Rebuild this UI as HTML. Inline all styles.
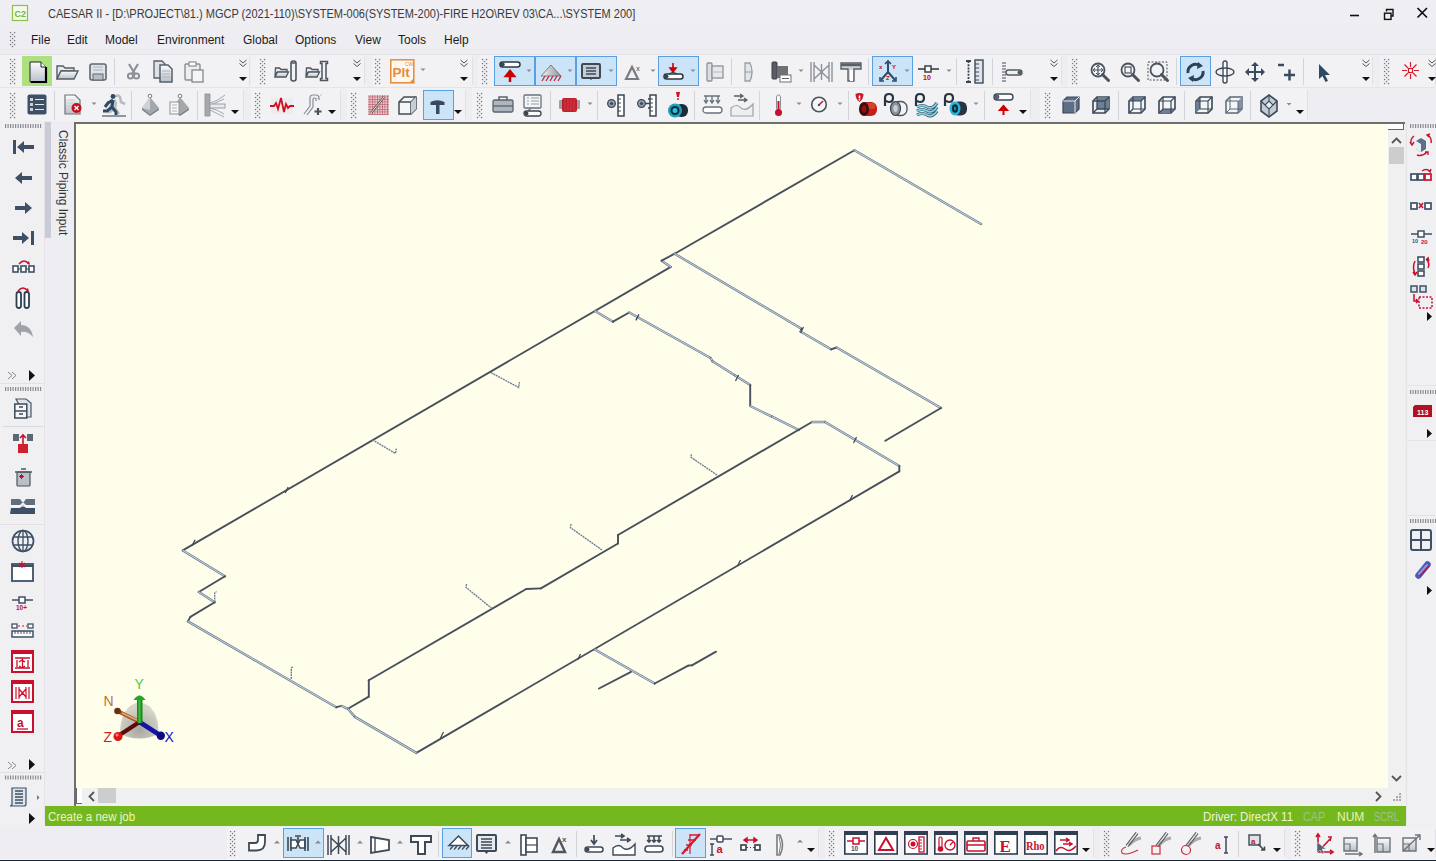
<!DOCTYPE html>
<html><head><meta charset="utf-8"><style>
html,body{margin:0;padding:0;}
body{width:1436px;height:861px;position:relative;overflow:hidden;background:#eeeef2;font-family:"Liberation Sans",sans-serif;}
.t{position:absolute;white-space:nowrap;line-height:14px;}
svg{position:absolute;overflow:visible;}
</style></head><body>
<div style="position:absolute;left:0px;top:0px;width:1436px;height:27px;background:#eeeef3;"></div><div class="t" style="left:48px;top:6.5px;font-size:12px;color:#3a3a3a;transform:scaleX(0.917);transform-origin:0 0;">CAESAR II - [D:\PROJECT\81.) MGCP (2021-110)\SYSTEM-006(SYSTEM-200)-FIRE H2O\REV 03\CA...\SYSTEM 200]</div><div class="t" style="left:31px;top:33px;font-size:12px;color:#1b1b1b;">File</div><div class="t" style="left:67px;top:33px;font-size:12px;color:#1b1b1b;">Edit</div><div class="t" style="left:105px;top:33px;font-size:12px;color:#1b1b1b;">Model</div><div class="t" style="left:157px;top:33px;font-size:12px;color:#1b1b1b;">Environment</div><div class="t" style="left:243px;top:33px;font-size:12px;color:#1b1b1b;">Global</div><div class="t" style="left:295px;top:33px;font-size:12px;color:#1b1b1b;">Options</div><div class="t" style="left:355px;top:33px;font-size:12px;color:#1b1b1b;">View</div><div class="t" style="left:398px;top:33px;font-size:12px;color:#1b1b1b;">Tools</div><div class="t" style="left:444px;top:33px;font-size:12px;color:#1b1b1b;">Help</div><div style="position:absolute;left:0px;top:54px;width:1436px;height:1px;background:#e2e2e8;"></div><div style="position:absolute;left:0px;top:49px;width:1436px;height:1px;background:#e8e8ee;"></div><div style="position:absolute;left:0px;top:87px;width:1436px;height:1px;background:#e4e4ea;"></div><div style="position:absolute;left:74px;top:122px;width:1331px;height:2px;background:#6f6f72;"></div><div style="position:absolute;left:74px;top:122px;width:2px;height:684px;background:#6f6f72;"></div><div style="position:absolute;left:76px;top:124px;width:1312px;height:664px;background:#fffeea;"></div><div style="position:absolute;left:1388px;top:124px;width:17px;height:664px;background:#f0f0f0;"></div><div style="position:absolute;left:1389px;top:147px;width:15px;height:17px;background:#cdcdcd;"></div><div style="position:absolute;left:76px;top:788px;width:1329px;height:18px;background:#f0f0f0;"></div><div style="position:absolute;left:98px;top:788px;width:18px;height:15px;background:#cdcdcd;"></div><div style="position:absolute;left:1388px;top:124px;width:16px;height:6px;background:#ffffff;border-right:1px solid #666;border-bottom:1px solid #666;box-sizing:border-box;"></div><div style="position:absolute;left:76px;top:788px;width:6px;height:16px;background:#ffffff;border-left:1px solid #666;border-bottom:1px solid #666;box-sizing:border-box;"></div><div style="position:absolute;left:45px;top:122px;width:6px;height:116px;background:#cacbd6;"></div><div class="t" style="left:57px;top:130px;font-size:12px;color:#333;transform:rotate(90deg);transform-origin:0 0;left:70px;">Classic Piping Input</div><div style="position:absolute;left:44px;top:122px;width:1px;height:700px;background:#e3e3e8;"></div><div style="position:absolute;left:1406px;top:122px;width:1px;height:700px;background:#e3e3e8;"></div><div style="position:absolute;left:45px;top:806px;width:1361px;height:20px;background:#74b71f;"></div><div class="t" style="left:48px;top:810px;font-size:12px;color:#e9f6c4;transform:scaleX(0.96);transform-origin:0 0;">Create a new job</div><div class="t" style="left:1203px;top:810px;font-size:12px;color:#edf6dc;transform:scaleX(0.96);transform-origin:0 0;">Driver: DirectX 11</div><div class="t" style="left:1303px;top:810px;font-size:12px;color:#a0c090;transform:scaleX(0.9);transform-origin:0 0;">CAP</div><div class="t" style="left:1337px;top:810px;font-size:12px;color:#e6f5b8;">NUM</div><div class="t" style="left:1374px;top:810px;font-size:12px;color:#a0c090;transform:scaleX(0.78);transform-origin:0 0;">SCRL</div><div style="position:absolute;left:0px;top:859px;width:1436px;height:1px;background:#f6f6fa;"></div><div style="position:absolute;left:0px;top:860px;width:1436px;height:1px;background:#1a2430;"></div>
<svg width="1436" height="861" style="left:0;top:0;" viewBox="0 0 1436 861">
<defs>
<linearGradient id="gdoc" x1="0" y1="0" x2="0" y2="1"><stop offset="0" stop-color="#fbfcfd"/><stop offset="1" stop-color="#b9c0c9"/></linearGradient>
<linearGradient id="gpyr" x1="0" y1="0" x2="1" y2="0"><stop offset="0" stop-color="#f4f4f4"/><stop offset="1" stop-color="#8f949a"/></linearGradient>
<pattern id="ghatch" width="2.5" height="2.5" patternUnits="userSpaceOnUse"><rect width="2.5" height="2.5" fill="#e8c8cc"/><path d="M0 0 h2.5 M0 0 v2.5" stroke="#a83848" stroke-width="0.9"/></pattern>
</defs>
<rect x="0" y="55" width="250" height="32" fill="#f2f2f5"/><rect x="249" y="57" width="1" height="28" fill="#e0e0e6"/><rect x="251" y="55" width="114" height="32" fill="#f2f2f5"/><rect x="364" y="57" width="1" height="28" fill="#e0e0e6"/><rect x="372" y="55" width="101" height="32" fill="#f2f2f5"/><rect x="472" y="57" width="1" height="28" fill="#e0e0e6"/><rect x="478" y="55" width="584" height="32" fill="#f2f2f5"/><rect x="1061" y="57" width="1" height="28" fill="#e0e0e6"/><rect x="1068" y="55" width="305" height="32" fill="#f2f2f5"/><rect x="1372" y="57" width="1" height="28" fill="#e0e0e6"/><rect x="1380" y="55" width="56" height="32" fill="#f2f2f5"/><rect x="1435" y="57" width="1" height="28" fill="#e0e0e6"/><rect x="0" y="88" width="244" height="33" fill="#f2f2f5"/><rect x="243" y="90" width="1" height="29" fill="#e0e0e6"/><rect x="251" y="88" width="90" height="33" fill="#f2f2f5"/><rect x="340" y="90" width="1" height="29" fill="#e0e0e6"/><rect x="347" y="88" width="119" height="33" fill="#f2f2f5"/><rect x="465" y="90" width="1" height="29" fill="#e0e0e6"/><rect x="472" y="88" width="559" height="33" fill="#f2f2f5"/><rect x="1030" y="90" width="1" height="29" fill="#e0e0e6"/><rect x="1040" y="88" width="268" height="33" fill="#f2f2f5"/><rect x="1307" y="90" width="1" height="29" fill="#e0e0e6"/><rect x="9.9" y="58.9" width="1.3" height="1.3" fill="#77777f"/><rect x="13.9" y="58.9" width="1.3" height="1.3" fill="#77777f"/><rect x="11.9" y="60.9" width="1.3" height="1.3" fill="#77777f"/><rect x="9.9" y="62.9" width="1.3" height="1.3" fill="#77777f"/><rect x="13.9" y="62.9" width="1.3" height="1.3" fill="#77777f"/><rect x="11.9" y="64.9" width="1.3" height="1.3" fill="#77777f"/><rect x="9.9" y="66.9" width="1.3" height="1.3" fill="#77777f"/><rect x="13.9" y="66.9" width="1.3" height="1.3" fill="#77777f"/><rect x="11.9" y="68.9" width="1.3" height="1.3" fill="#77777f"/><rect x="9.9" y="70.9" width="1.3" height="1.3" fill="#77777f"/><rect x="13.9" y="70.9" width="1.3" height="1.3" fill="#77777f"/><rect x="11.9" y="72.9" width="1.3" height="1.3" fill="#77777f"/><rect x="9.9" y="74.9" width="1.3" height="1.3" fill="#77777f"/><rect x="13.9" y="74.9" width="1.3" height="1.3" fill="#77777f"/><rect x="11.9" y="76.9" width="1.3" height="1.3" fill="#77777f"/><rect x="9.9" y="78.9" width="1.3" height="1.3" fill="#77777f"/><rect x="13.9" y="78.9" width="1.3" height="1.3" fill="#77777f"/><rect x="11.9" y="80.9" width="1.3" height="1.3" fill="#77777f"/><rect x="9.9" y="82.9" width="1.3" height="1.3" fill="#77777f"/><rect x="13.9" y="82.9" width="1.3" height="1.3" fill="#77777f"/><rect x="259.9" y="58.9" width="1.3" height="1.3" fill="#77777f"/><rect x="263.9" y="58.9" width="1.3" height="1.3" fill="#77777f"/><rect x="261.9" y="60.9" width="1.3" height="1.3" fill="#77777f"/><rect x="259.9" y="62.9" width="1.3" height="1.3" fill="#77777f"/><rect x="263.9" y="62.9" width="1.3" height="1.3" fill="#77777f"/><rect x="261.9" y="64.9" width="1.3" height="1.3" fill="#77777f"/><rect x="259.9" y="66.9" width="1.3" height="1.3" fill="#77777f"/><rect x="263.9" y="66.9" width="1.3" height="1.3" fill="#77777f"/><rect x="261.9" y="68.9" width="1.3" height="1.3" fill="#77777f"/><rect x="259.9" y="70.9" width="1.3" height="1.3" fill="#77777f"/><rect x="263.9" y="70.9" width="1.3" height="1.3" fill="#77777f"/><rect x="261.9" y="72.9" width="1.3" height="1.3" fill="#77777f"/><rect x="259.9" y="74.9" width="1.3" height="1.3" fill="#77777f"/><rect x="263.9" y="74.9" width="1.3" height="1.3" fill="#77777f"/><rect x="261.9" y="76.9" width="1.3" height="1.3" fill="#77777f"/><rect x="259.9" y="78.9" width="1.3" height="1.3" fill="#77777f"/><rect x="263.9" y="78.9" width="1.3" height="1.3" fill="#77777f"/><rect x="261.9" y="80.9" width="1.3" height="1.3" fill="#77777f"/><rect x="259.9" y="82.9" width="1.3" height="1.3" fill="#77777f"/><rect x="263.9" y="82.9" width="1.3" height="1.3" fill="#77777f"/><rect x="374.9" y="58.9" width="1.3" height="1.3" fill="#77777f"/><rect x="378.9" y="58.9" width="1.3" height="1.3" fill="#77777f"/><rect x="376.9" y="60.9" width="1.3" height="1.3" fill="#77777f"/><rect x="374.9" y="62.9" width="1.3" height="1.3" fill="#77777f"/><rect x="378.9" y="62.9" width="1.3" height="1.3" fill="#77777f"/><rect x="376.9" y="64.9" width="1.3" height="1.3" fill="#77777f"/><rect x="374.9" y="66.9" width="1.3" height="1.3" fill="#77777f"/><rect x="378.9" y="66.9" width="1.3" height="1.3" fill="#77777f"/><rect x="376.9" y="68.9" width="1.3" height="1.3" fill="#77777f"/><rect x="374.9" y="70.9" width="1.3" height="1.3" fill="#77777f"/><rect x="378.9" y="70.9" width="1.3" height="1.3" fill="#77777f"/><rect x="376.9" y="72.9" width="1.3" height="1.3" fill="#77777f"/><rect x="374.9" y="74.9" width="1.3" height="1.3" fill="#77777f"/><rect x="378.9" y="74.9" width="1.3" height="1.3" fill="#77777f"/><rect x="376.9" y="76.9" width="1.3" height="1.3" fill="#77777f"/><rect x="374.9" y="78.9" width="1.3" height="1.3" fill="#77777f"/><rect x="378.9" y="78.9" width="1.3" height="1.3" fill="#77777f"/><rect x="376.9" y="80.9" width="1.3" height="1.3" fill="#77777f"/><rect x="374.9" y="82.9" width="1.3" height="1.3" fill="#77777f"/><rect x="378.9" y="82.9" width="1.3" height="1.3" fill="#77777f"/><rect x="481.9" y="58.9" width="1.3" height="1.3" fill="#77777f"/><rect x="485.9" y="58.9" width="1.3" height="1.3" fill="#77777f"/><rect x="483.9" y="60.9" width="1.3" height="1.3" fill="#77777f"/><rect x="481.9" y="62.9" width="1.3" height="1.3" fill="#77777f"/><rect x="485.9" y="62.9" width="1.3" height="1.3" fill="#77777f"/><rect x="483.9" y="64.9" width="1.3" height="1.3" fill="#77777f"/><rect x="481.9" y="66.9" width="1.3" height="1.3" fill="#77777f"/><rect x="485.9" y="66.9" width="1.3" height="1.3" fill="#77777f"/><rect x="483.9" y="68.9" width="1.3" height="1.3" fill="#77777f"/><rect x="481.9" y="70.9" width="1.3" height="1.3" fill="#77777f"/><rect x="485.9" y="70.9" width="1.3" height="1.3" fill="#77777f"/><rect x="483.9" y="72.9" width="1.3" height="1.3" fill="#77777f"/><rect x="481.9" y="74.9" width="1.3" height="1.3" fill="#77777f"/><rect x="485.9" y="74.9" width="1.3" height="1.3" fill="#77777f"/><rect x="483.9" y="76.9" width="1.3" height="1.3" fill="#77777f"/><rect x="481.9" y="78.9" width="1.3" height="1.3" fill="#77777f"/><rect x="485.9" y="78.9" width="1.3" height="1.3" fill="#77777f"/><rect x="483.9" y="80.9" width="1.3" height="1.3" fill="#77777f"/><rect x="481.9" y="82.9" width="1.3" height="1.3" fill="#77777f"/><rect x="485.9" y="82.9" width="1.3" height="1.3" fill="#77777f"/><rect x="1071.9" y="58.9" width="1.3" height="1.3" fill="#77777f"/><rect x="1075.9" y="58.9" width="1.3" height="1.3" fill="#77777f"/><rect x="1073.9" y="60.9" width="1.3" height="1.3" fill="#77777f"/><rect x="1071.9" y="62.9" width="1.3" height="1.3" fill="#77777f"/><rect x="1075.9" y="62.9" width="1.3" height="1.3" fill="#77777f"/><rect x="1073.9" y="64.9" width="1.3" height="1.3" fill="#77777f"/><rect x="1071.9" y="66.9" width="1.3" height="1.3" fill="#77777f"/><rect x="1075.9" y="66.9" width="1.3" height="1.3" fill="#77777f"/><rect x="1073.9" y="68.9" width="1.3" height="1.3" fill="#77777f"/><rect x="1071.9" y="70.9" width="1.3" height="1.3" fill="#77777f"/><rect x="1075.9" y="70.9" width="1.3" height="1.3" fill="#77777f"/><rect x="1073.9" y="72.9" width="1.3" height="1.3" fill="#77777f"/><rect x="1071.9" y="74.9" width="1.3" height="1.3" fill="#77777f"/><rect x="1075.9" y="74.9" width="1.3" height="1.3" fill="#77777f"/><rect x="1073.9" y="76.9" width="1.3" height="1.3" fill="#77777f"/><rect x="1071.9" y="78.9" width="1.3" height="1.3" fill="#77777f"/><rect x="1075.9" y="78.9" width="1.3" height="1.3" fill="#77777f"/><rect x="1073.9" y="80.9" width="1.3" height="1.3" fill="#77777f"/><rect x="1071.9" y="82.9" width="1.3" height="1.3" fill="#77777f"/><rect x="1075.9" y="82.9" width="1.3" height="1.3" fill="#77777f"/><rect x="1383.9" y="58.9" width="1.3" height="1.3" fill="#77777f"/><rect x="1387.9" y="58.9" width="1.3" height="1.3" fill="#77777f"/><rect x="1385.9" y="60.9" width="1.3" height="1.3" fill="#77777f"/><rect x="1383.9" y="62.9" width="1.3" height="1.3" fill="#77777f"/><rect x="1387.9" y="62.9" width="1.3" height="1.3" fill="#77777f"/><rect x="1385.9" y="64.9" width="1.3" height="1.3" fill="#77777f"/><rect x="1383.9" y="66.9" width="1.3" height="1.3" fill="#77777f"/><rect x="1387.9" y="66.9" width="1.3" height="1.3" fill="#77777f"/><rect x="1385.9" y="68.9" width="1.3" height="1.3" fill="#77777f"/><rect x="1383.9" y="70.9" width="1.3" height="1.3" fill="#77777f"/><rect x="1387.9" y="70.9" width="1.3" height="1.3" fill="#77777f"/><rect x="1385.9" y="72.9" width="1.3" height="1.3" fill="#77777f"/><rect x="1383.9" y="74.9" width="1.3" height="1.3" fill="#77777f"/><rect x="1387.9" y="74.9" width="1.3" height="1.3" fill="#77777f"/><rect x="1385.9" y="76.9" width="1.3" height="1.3" fill="#77777f"/><rect x="1383.9" y="78.9" width="1.3" height="1.3" fill="#77777f"/><rect x="1387.9" y="78.9" width="1.3" height="1.3" fill="#77777f"/><rect x="1385.9" y="80.9" width="1.3" height="1.3" fill="#77777f"/><rect x="1383.9" y="82.9" width="1.3" height="1.3" fill="#77777f"/><rect x="1387.9" y="82.9" width="1.3" height="1.3" fill="#77777f"/><rect x="22.5" y="56.5" width="29" height="29" fill="#ade07e" stroke="#ade07e" stroke-width="1"/><g transform="translate(29,61)"><path d="M1 1 h11 l5 5 v15 h-16z" fill="url(#gdoc)" stroke="#222" stroke-width="1"/><path d="M2 21 h15 v-15" stroke="#000" stroke-width="2.2" fill="none"/><path d="M12 1 v5 h5" fill="#fff" stroke="#222" stroke-width="1"/></g><g transform="translate(56,63)"><path d="M1 3 h6 l2 2 h9 v3 h-13 l-4 8z" fill="#e8eaee" stroke="#555d66" stroke-width="1.4"/><path d="M5 8 h17 l-4 8 h-17z" fill="url(#gdoc)" stroke="#555d66" stroke-width="1.4"/></g><g transform="translate(89,63)"><rect x="1" y="1" width="16" height="16" rx="2" fill="#dfe2e7" stroke="#5f6770" stroke-width="1.6"/><rect x="4" y="11" width="10" height="6" fill="#b8bec6" stroke="#5f6770" stroke-width="1"/><path d="M4 4 h10 M4 7 h10" stroke="#b0b5bc" stroke-width="1"/></g><rect x="114" y="58" width="1" height="27" fill="#d3d3da"/><g transform="translate(127,63)"><path d="M2 1 l6 10 M11 1 l-6 10" stroke="#8d9197" stroke-width="2.2"/><circle cx="3.5" cy="13" r="2.6" fill="none" stroke="#8d9197" stroke-width="2"/><circle cx="9.5" cy="13" r="2.6" fill="none" stroke="#8d9197" stroke-width="2"/></g><g transform="translate(153,60)"><path d="M1 1 h8 l3 3 v14 h-11z" fill="#dde2e8" stroke="#56606b" stroke-width="1.3"/><path d="M7 5 h8 l4 4 v13 h-12z" fill="url(#gdoc)" stroke="#56606b" stroke-width="1.5"/><path d="M9 11 h8 M9 14 h8 M9 17 h8" stroke="#aab3bd" stroke-width="1"/></g><g transform="translate(184,61)"><rect x="1" y="3" width="15" height="16" rx="1" fill="#eceef0" stroke="#8a8f95" stroke-width="1.4"/><rect x="5" y="1" width="7" height="4" fill="#fff" stroke="#8a8f95" stroke-width="1.2"/><rect x="8" y="9" width="11" height="12" fill="#f4f5f6" stroke="#8a8f95" stroke-width="1.4"/></g><path d="M239.5 60 l3.5 3 l3.5 -3 M239.5 63.5 l3.5 3 l3.5 -3" stroke="#555" stroke-width="1" fill="none"/><path d="M239 77 h8 l-4 4z" fill="#111"/><g transform="translate(274,60)"><path d="M1.5 8 h4 l1.5 1.5 h6 v3 h-10 l-2 4z" fill="#e6e9ed" stroke="#4e565f" stroke-width="1.3"/><path d="M3.5 12 h11 l-2.5 5 h-11z" fill="url(#gdoc)" stroke="#4e565f" stroke-width="1.3"/><rect x="17" y="1" width="5" height="20" rx="2.2" fill="#f0f2f4" stroke="#4e565f" stroke-width="1.6"/><path d="M17.5 3 h4" stroke="#4e565f" stroke-width="1.5"/></g><g transform="translate(305,60)"><path d="M1.5 8 h4 l1.5 1.5 h6 v3 h-10 l-2 4z" fill="#e6e9ed" stroke="#4e565f" stroke-width="1.3"/><path d="M3.5 12 h11 l-2.5 5 h-11z" fill="url(#gdoc)" stroke="#4e565f" stroke-width="1.3"/><path d="M15.5 1.5 h7 v2 h-1.5 v15 h1.5 v2 h-7 v-2 h1.5 v-15 h-1.5z" fill="#f0f2f4" stroke="#4e565f" stroke-width="1.5"/></g><path d="M353.5 60 l3.5 3 l3.5 -3 M353.5 63.5 l3.5 3 l3.5 -3" stroke="#555" stroke-width="1" fill="none"/><path d="M353 77 h8 l-4 4z" fill="#111"/><g transform="translate(390,59)"><rect x="0.8" y="0.8" width="23" height="23" fill="#fff8f0" stroke="#e58a3a" stroke-width="1.5"/><text x="2.5" y="17.5" font-family="Liberation Sans" font-weight="bold" font-size="13.5" fill="#e58a3a">Plt</text><text x="15" y="7" font-family="Liberation Sans" font-size="5" fill="#e58a3a">CW</text><path d="M20 23 l3 -3 v3z" fill="#e58a3a"/></g><path d="M420.5 68.5 h5 l-2.5 2.5z" fill="#8a8a90"/><path d="M460.5 60 l3.5 3 l3.5 -3 M460.5 63.5 l3.5 3 l3.5 -3" stroke="#555" stroke-width="1" fill="none"/><path d="M460 77 h8 l-4 4z" fill="#111"/><rect x="494.5" y="56.5" width="40" height="29" fill="#cce4f7" stroke="#5b9fe3" stroke-width="1"/><rect x="535.5" y="56.5" width="40" height="29" fill="#cce4f7" stroke="#5b9fe3" stroke-width="1"/><rect x="576.5" y="56.5" width="40" height="29" fill="#cce4f7" stroke="#5b9fe3" stroke-width="1"/><g transform="translate(499,61)"><rect x="1" y="1" width="20" height="5" rx="2.5" fill="#fff" stroke="#2c3540" stroke-width="1.5"/><circle cx="3.5" cy="3.5" r="2.2" fill="#3b4654"/><path d="M11 21 v-9 M7 15 l4 -5 l4 5z" stroke="#c00" stroke-width="2.5" fill="#c00"/></g><path d="M526.5 69.5 h5 l-2.5 2.5z" fill="#8a8a90"/><g transform="translate(539,62)"><path d="M2 14 l10 -11 l10 11z" fill="url(#gpyr)" stroke="#666" stroke-width="0.8"/><path d="M3 19 l3 -5 M7 19 l3 -5 M11 19 l3 -5 M15 19 l3 -5 M19 19 l3 -5" stroke="#c03040" stroke-width="1.4"/></g><path d="M567.5 69.5 h5 l-2.5 2.5z" fill="#8a8a90"/><g transform="translate(581,62)"><rect x="1" y="2" width="18" height="14" rx="1" fill="#c5ccd4" stroke="#3e4a58" stroke-width="2"/><path d="M5 6 h10 M5 9 h10 M5 12 h10" stroke="#3e4a58" stroke-width="1.3"/><path d="M8 16 l2 2 l2 -2z" fill="#3e4a58"/></g><path d="M608.5 69.5 h5 l-2.5 2.5z" fill="#8a8a90"/><g transform="translate(624,63)"><path d="M2 16 l6 -12 l6 12z" fill="none" stroke="#777c82" stroke-width="2.2"/><text x="12" y="8" font-family="Liberation Sans" font-weight="bold" font-size="7" fill="#777c82">x</text></g><path d="M650.5 69.5 h5 l-2.5 2.5z" fill="#8a8a90"/><rect x="658.5" y="56.5" width="40" height="29" fill="#cce4f7" stroke="#5b9fe3" stroke-width="1"/><g transform="translate(663,62)"><path d="M10 1 v8 M7 6 l3 4 l3 -4z" stroke="#c00" stroke-width="1.6" fill="#c00"/><rect x="1" y="12" width="19" height="5" rx="2.5" fill="#fff" stroke="#2c3540" stroke-width="1.5"/><circle cx="3.5" cy="14.5" r="2" fill="#3b4654"/><path d="M6 12 q4 -3 8 0" fill="none" stroke="#2c3540" stroke-width="1.2"/></g><path d="M690.5 69.5 h5 l-2.5 2.5z" fill="#8a8a90"/><g transform="translate(706,61)"><rect x="1" y="2" width="5" height="18" rx="1" fill="#dcdfe3" stroke="#8f949a" stroke-width="1.3"/><rect x="6" y="5" width="11" height="12" fill="#e6e8eb" stroke="#8f949a" stroke-width="1.3"/><path d="M6 11 h11" stroke="#b7bbc0" stroke-width="1"/></g><rect x="731" y="58" width="1" height="27" fill="#d3d3da"/><g transform="translate(744,61)"><path d="M1 2 h5 q4 9 0 18 h-5z" fill="#e3e6e9" stroke="#9a9ea4" stroke-width="1.3"/><path d="M1 11 h8" stroke="#9a9ea4" stroke-width="1"/></g><g transform="translate(771,61)"><rect x="1" y="1" width="5" height="17" rx="1" fill="#5a5e64" stroke="#3b3f44" stroke-width="1"/><rect x="6" y="5" width="11" height="12" fill="#6d7177"/><rect x="9" y="14" width="11" height="7" fill="#fff" stroke="#6d7177" stroke-width="1"/><path d="M11 17.5 h7" stroke="#333" stroke-width="0.8"/></g><path d="M798.5 69.5 h5 l-2.5 2.5z" fill="#8a8a90"/><g transform="translate(810,61)"><path d="M1 1 v20 M4 1 v20 M19 1 v20 M22 1 v20 M4 4 l7.5 7 l7.5 -7 M4 18 l7.5 -7 l7.5 7 M11.5 3 v16" stroke="#8e9399" stroke-width="1.4" fill="none"/></g><g transform="translate(840,62)"><path d="M1 1 h20 v6 h-7 v12 h-6 v-12 h-7z" fill="#cfd3d8" stroke="#5a6068" stroke-width="1.4"/><path d="M1 3 h20" stroke="#5a6068" stroke-width="2.5"/><rect x="10" y="8" width="3" height="11" fill="#fff"/></g><rect x="868" y="58" width="1" height="27" fill="#d3d3da"/><rect x="872.5" y="56.5" width="40" height="29" fill="#cce4f7" stroke="#5b9fe3" stroke-width="1"/><g transform="translate(878,59)"><path d="M10 2 v11 M10 13 l-7 8 M10 13 l7 8" stroke="#2e4a6e" stroke-width="2"/><path d="M7 5 l3 -3 l3 3 M2 18 v4 h4 M18 18 v4 h-4" stroke="#2e4a6e" stroke-width="1.6" fill="none"/><text x="1" y="10" font-family="Liberation Sans" font-weight="bold" font-size="6" fill="#c00">x</text><text x="14" y="10" font-family="Liberation Sans" font-weight="bold" font-size="6" fill="#c00">Y</text><text x="8" y="21" font-family="Liberation Sans" font-weight="bold" font-size="6" fill="#c00">Z</text></g><path d="M904.5 69.5 h5 l-2.5 2.5z" fill="#8a8a90"/><g transform="translate(917,63)"><path d="M1 6 h21" stroke="#3b3f44" stroke-width="1.6"/><rect x="8" y="3" width="6" height="6" fill="#fff" stroke="#3b3f44" stroke-width="1.5"/><text x="6" y="17" font-family="Liberation Sans" font-weight="bold" font-size="7" fill="#c00">10</text></g><path d="M946.5 69.5 h5 l-2.5 2.5z" fill="#8a8a90"/><rect x="956" y="58" width="1" height="27" fill="#d3d3da"/><g transform="translate(965,59)"><path d="M1 2 h5 M1 23 h5 M3.5 2 v21" stroke="#3a4450" stroke-width="1.8" stroke-dasharray="2 1.2"/><path d="M1 2 h5 M1 23 h5" stroke="#3a4450" stroke-width="2"/><rect x="10" y="1" width="8" height="23" fill="#dfe4ea" stroke="#3e4a58" stroke-width="1.4"/><path d="M10 5 h4 M10 9 h4 M10 13 h4 M10 17 h4 M10 21 h4" stroke="#3e4a58" stroke-width="1"/></g><rect x="992" y="58" width="1" height="27" fill="#d3d3da"/><g transform="translate(1001,61)"><path d="M3 1 v20" stroke="#9ca0a6" stroke-width="4" stroke-dasharray="2 1"/><rect x="5" y="9" width="16" height="5" rx="2.5" fill="#eef0f2" stroke="#555b62" stroke-width="1.4"/><circle cx="18.5" cy="11.5" r="2" fill="#555b62"/></g><path d="M1050.5 60 l3.5 3 l3.5 -3 M1050.5 63.5 l3.5 3 l3.5 -3" stroke="#555" stroke-width="1" fill="none"/><path d="M1050 77 h8 l-4 4z" fill="#111"/><g transform="translate(1090,62)"><circle cx="8" cy="8" r="6.5" fill="#f3f4f6" stroke="#4a535e" stroke-width="1.8"/><path d="M12.5 12.5 l6 6" stroke="#4a535e" stroke-width="3" stroke-linecap="round"/><path d="M8 4 v8 M4 8 h8" stroke="#4a535e" stroke-width="1.2"/><path d="M6 5 l2 -2 l2 2 M6 11 l2 2 l2 -2 M5 6 l-2 2 l2 2 M11 6 l2 2 l-2 2" stroke="#4a535e" stroke-width="1" fill="none"/></g><g transform="translate(1120,62)"><circle cx="8" cy="8" r="6.5" fill="#f3f4f6" stroke="#4a535e" stroke-width="1.8"/><path d="M12.5 12.5 l6 6" stroke="#4a535e" stroke-width="3" stroke-linecap="round"/><rect x="5" y="5" width="6" height="6" fill="none" stroke="#4a535e" stroke-width="1.2"/></g><g transform="translate(1147,61)"><rect x="1" y="1" width="19" height="18" fill="none" stroke="#4a535e" stroke-width="1" stroke-dasharray="2 1.5"/></g><g transform="translate(1149,62)"><circle cx="8" cy="8" r="6.5" fill="#f3f4f6" stroke="#4a535e" stroke-width="1.8"/><path d="M12.5 12.5 l6 6" stroke="#4a535e" stroke-width="3" stroke-linecap="round"/></g><rect x="1176" y="58" width="1" height="27" fill="#d3d3da"/><rect x="1180.5" y="56.5" width="30" height="29" fill="#cce4f7" stroke="#5b9fe3" stroke-width="1"/><g transform="translate(1185,62)"><path d="M3 11 a7.5 7.5 0 0 1 12 -7" fill="none" stroke="#2f4255" stroke-width="3"/><path d="M13 0 l5 4 l-6 3z" fill="#2f4255"/><path d="M18 9 a7.5 7.5 0 0 1 -12 7" fill="none" stroke="#2f4255" stroke-width="3"/><path d="M8 20 l-5 -4 l6 -3z" fill="#2f4255"/></g><g transform="translate(1215,60)"><rect x="8" y="1" width="4" height="22" rx="2" fill="#fff" stroke="#3e4a58" stroke-width="1.4"/><ellipse cx="10" cy="12" rx="9" ry="4" fill="none" stroke="#3e4a58" stroke-width="1.4"/></g><g transform="translate(1245,61)"><path d="M10 1 l4 4 h-3 v5 h5 v-3 l4 4 l-4 4 v-3 h-5 v5 h3 l-4 4 l-4 -4 h3 v-5 h-5 v3 l-4 -4 l4 -4 v3 h5 v-5 h-3z" fill="#3a4b5e"/></g><g transform="translate(1277,63)"><path d="M1 2 h6 M7 12 h11 M12.5 6.5 v11" stroke="#3a4b5e" stroke-width="2.5"/></g><rect x="1303" y="58" width="1" height="27" fill="#d3d3da"/><g transform="translate(1318,63)"><path d="M1 1 v15 l3.5 -3 l3 6 l2.5 -1.3 l-3 -5.7 h5z" fill="#2f4a66"/></g><path d="M1362.5 60 l3.5 3 l3.5 -3 M1362.5 63.5 l3.5 3 l3.5 -3" stroke="#555" stroke-width="1" fill="none"/><path d="M1362 77 h8 l-4 4z" fill="#111"/><g transform="translate(1402,62)"><path d="M8.5 0 v5 M8.5 12 v5 M0 8.5 h5 M12 8.5 h5 M2.5 2.5 l3.5 3.5 M11 11 l3.5 3.5 M14.5 2.5 l-3.5 3.5 M6 11 l-3.5 3.5" stroke="#d02030" stroke-width="1.2"/><rect x="6.5" y="6.5" width="4" height="4" fill="#fff" stroke="#d02030" stroke-width="1.2"/></g><path d="M1428.5 60 l3.5 3 l3.5 -3 M1428.5 63.5 l3.5 3 l3.5 -3" stroke="#555" stroke-width="1" fill="none"/><path d="M1428 77 h8 l-4 4z" fill="#111"/><rect x="9.9" y="92.9" width="1.3" height="1.3" fill="#77777f"/><rect x="13.9" y="92.9" width="1.3" height="1.3" fill="#77777f"/><rect x="11.9" y="94.9" width="1.3" height="1.3" fill="#77777f"/><rect x="9.9" y="96.9" width="1.3" height="1.3" fill="#77777f"/><rect x="13.9" y="96.9" width="1.3" height="1.3" fill="#77777f"/><rect x="11.9" y="98.9" width="1.3" height="1.3" fill="#77777f"/><rect x="9.9" y="100.9" width="1.3" height="1.3" fill="#77777f"/><rect x="13.9" y="100.9" width="1.3" height="1.3" fill="#77777f"/><rect x="11.9" y="102.9" width="1.3" height="1.3" fill="#77777f"/><rect x="9.9" y="104.9" width="1.3" height="1.3" fill="#77777f"/><rect x="13.9" y="104.9" width="1.3" height="1.3" fill="#77777f"/><rect x="11.9" y="106.9" width="1.3" height="1.3" fill="#77777f"/><rect x="9.9" y="108.9" width="1.3" height="1.3" fill="#77777f"/><rect x="13.9" y="108.9" width="1.3" height="1.3" fill="#77777f"/><rect x="11.9" y="110.9" width="1.3" height="1.3" fill="#77777f"/><rect x="9.9" y="112.9" width="1.3" height="1.3" fill="#77777f"/><rect x="13.9" y="112.9" width="1.3" height="1.3" fill="#77777f"/><rect x="11.9" y="114.9" width="1.3" height="1.3" fill="#77777f"/><rect x="9.9" y="116.9" width="1.3" height="1.3" fill="#77777f"/><rect x="13.9" y="116.9" width="1.3" height="1.3" fill="#77777f"/><rect x="254.9" y="92.9" width="1.3" height="1.3" fill="#77777f"/><rect x="258.9" y="92.9" width="1.3" height="1.3" fill="#77777f"/><rect x="256.9" y="94.9" width="1.3" height="1.3" fill="#77777f"/><rect x="254.9" y="96.9" width="1.3" height="1.3" fill="#77777f"/><rect x="258.9" y="96.9" width="1.3" height="1.3" fill="#77777f"/><rect x="256.9" y="98.9" width="1.3" height="1.3" fill="#77777f"/><rect x="254.9" y="100.9" width="1.3" height="1.3" fill="#77777f"/><rect x="258.9" y="100.9" width="1.3" height="1.3" fill="#77777f"/><rect x="256.9" y="102.9" width="1.3" height="1.3" fill="#77777f"/><rect x="254.9" y="104.9" width="1.3" height="1.3" fill="#77777f"/><rect x="258.9" y="104.9" width="1.3" height="1.3" fill="#77777f"/><rect x="256.9" y="106.9" width="1.3" height="1.3" fill="#77777f"/><rect x="254.9" y="108.9" width="1.3" height="1.3" fill="#77777f"/><rect x="258.9" y="108.9" width="1.3" height="1.3" fill="#77777f"/><rect x="256.9" y="110.9" width="1.3" height="1.3" fill="#77777f"/><rect x="254.9" y="112.9" width="1.3" height="1.3" fill="#77777f"/><rect x="258.9" y="112.9" width="1.3" height="1.3" fill="#77777f"/><rect x="256.9" y="114.9" width="1.3" height="1.3" fill="#77777f"/><rect x="254.9" y="116.9" width="1.3" height="1.3" fill="#77777f"/><rect x="258.9" y="116.9" width="1.3" height="1.3" fill="#77777f"/><rect x="350.9" y="92.9" width="1.3" height="1.3" fill="#77777f"/><rect x="354.9" y="92.9" width="1.3" height="1.3" fill="#77777f"/><rect x="352.9" y="94.9" width="1.3" height="1.3" fill="#77777f"/><rect x="350.9" y="96.9" width="1.3" height="1.3" fill="#77777f"/><rect x="354.9" y="96.9" width="1.3" height="1.3" fill="#77777f"/><rect x="352.9" y="98.9" width="1.3" height="1.3" fill="#77777f"/><rect x="350.9" y="100.9" width="1.3" height="1.3" fill="#77777f"/><rect x="354.9" y="100.9" width="1.3" height="1.3" fill="#77777f"/><rect x="352.9" y="102.9" width="1.3" height="1.3" fill="#77777f"/><rect x="350.9" y="104.9" width="1.3" height="1.3" fill="#77777f"/><rect x="354.9" y="104.9" width="1.3" height="1.3" fill="#77777f"/><rect x="352.9" y="106.9" width="1.3" height="1.3" fill="#77777f"/><rect x="350.9" y="108.9" width="1.3" height="1.3" fill="#77777f"/><rect x="354.9" y="108.9" width="1.3" height="1.3" fill="#77777f"/><rect x="352.9" y="110.9" width="1.3" height="1.3" fill="#77777f"/><rect x="350.9" y="112.9" width="1.3" height="1.3" fill="#77777f"/><rect x="354.9" y="112.9" width="1.3" height="1.3" fill="#77777f"/><rect x="352.9" y="114.9" width="1.3" height="1.3" fill="#77777f"/><rect x="350.9" y="116.9" width="1.3" height="1.3" fill="#77777f"/><rect x="354.9" y="116.9" width="1.3" height="1.3" fill="#77777f"/><rect x="476.9" y="92.9" width="1.3" height="1.3" fill="#77777f"/><rect x="480.9" y="92.9" width="1.3" height="1.3" fill="#77777f"/><rect x="478.9" y="94.9" width="1.3" height="1.3" fill="#77777f"/><rect x="476.9" y="96.9" width="1.3" height="1.3" fill="#77777f"/><rect x="480.9" y="96.9" width="1.3" height="1.3" fill="#77777f"/><rect x="478.9" y="98.9" width="1.3" height="1.3" fill="#77777f"/><rect x="476.9" y="100.9" width="1.3" height="1.3" fill="#77777f"/><rect x="480.9" y="100.9" width="1.3" height="1.3" fill="#77777f"/><rect x="478.9" y="102.9" width="1.3" height="1.3" fill="#77777f"/><rect x="476.9" y="104.9" width="1.3" height="1.3" fill="#77777f"/><rect x="480.9" y="104.9" width="1.3" height="1.3" fill="#77777f"/><rect x="478.9" y="106.9" width="1.3" height="1.3" fill="#77777f"/><rect x="476.9" y="108.9" width="1.3" height="1.3" fill="#77777f"/><rect x="480.9" y="108.9" width="1.3" height="1.3" fill="#77777f"/><rect x="478.9" y="110.9" width="1.3" height="1.3" fill="#77777f"/><rect x="476.9" y="112.9" width="1.3" height="1.3" fill="#77777f"/><rect x="480.9" y="112.9" width="1.3" height="1.3" fill="#77777f"/><rect x="478.9" y="114.9" width="1.3" height="1.3" fill="#77777f"/><rect x="476.9" y="116.9" width="1.3" height="1.3" fill="#77777f"/><rect x="480.9" y="116.9" width="1.3" height="1.3" fill="#77777f"/><rect x="1044.9" y="92.9" width="1.3" height="1.3" fill="#77777f"/><rect x="1048.9" y="92.9" width="1.3" height="1.3" fill="#77777f"/><rect x="1046.9" y="94.9" width="1.3" height="1.3" fill="#77777f"/><rect x="1044.9" y="96.9" width="1.3" height="1.3" fill="#77777f"/><rect x="1048.9" y="96.9" width="1.3" height="1.3" fill="#77777f"/><rect x="1046.9" y="98.9" width="1.3" height="1.3" fill="#77777f"/><rect x="1044.9" y="100.9" width="1.3" height="1.3" fill="#77777f"/><rect x="1048.9" y="100.9" width="1.3" height="1.3" fill="#77777f"/><rect x="1046.9" y="102.9" width="1.3" height="1.3" fill="#77777f"/><rect x="1044.9" y="104.9" width="1.3" height="1.3" fill="#77777f"/><rect x="1048.9" y="104.9" width="1.3" height="1.3" fill="#77777f"/><rect x="1046.9" y="106.9" width="1.3" height="1.3" fill="#77777f"/><rect x="1044.9" y="108.9" width="1.3" height="1.3" fill="#77777f"/><rect x="1048.9" y="108.9" width="1.3" height="1.3" fill="#77777f"/><rect x="1046.9" y="110.9" width="1.3" height="1.3" fill="#77777f"/><rect x="1044.9" y="112.9" width="1.3" height="1.3" fill="#77777f"/><rect x="1048.9" y="112.9" width="1.3" height="1.3" fill="#77777f"/><rect x="1046.9" y="114.9" width="1.3" height="1.3" fill="#77777f"/><rect x="1044.9" y="116.9" width="1.3" height="1.3" fill="#77777f"/><rect x="1048.9" y="116.9" width="1.3" height="1.3" fill="#77777f"/><g transform="translate(27,94)"><rect x="0.5" y="0.5" width="19" height="20" rx="2" fill="#3e5066"/><rect x="3" y="4" width="3" height="3" fill="#c8d0d8"/><rect x="3" y="9" width="3" height="3" fill="#c8d0d8"/><rect x="3" y="14" width="3" height="3" fill="#c8d0d8"/><path d="M8 5.5 h9 M8 10.5 h9 M8 15.5 h9" stroke="#e8ecf0" stroke-width="1.2"/></g><rect x="54" y="91" width="1" height="29" fill="#d3d3da"/><g transform="translate(64,94)"><path d="M1 1 h10 l5 5 v14 h-15z" fill="url(#gdoc)" stroke="#6c737b" stroke-width="1.2"/><path d="M3 6 h8 M3 9 h10 M3 12 h10" stroke="#c0c6cc" stroke-width="0.8"/><circle cx="12.5" cy="14" r="5" fill="#c3101f"/><path d="M10.5 12 l4 4 M14.5 12 l-4 4" stroke="#fff" stroke-width="1.3"/></g><path d="M91.5 102.5 h5 l-2.5 2.5z" fill="#8a8a90"/><g transform="translate(102,94)"><path d="M13 3 q3 -3 5 0 l1 5 l4 2 M14 6 l-4 3 l-2 4 M14 8 l-1 6 l4 6 M13 14 l-5 4 l-3 0" stroke="#b8bcc2" stroke-width="2.6" fill="none"/><circle cx="11" cy="2.5" r="2.4" fill="#2f4a66"/><path d="M11 6 l-5 3 l-3 4 M11 6 l-1 7 l4 5 v3 M10 13 l-5 4 h-4" stroke="#2f4a66" stroke-width="3" fill="none"/><path d="M0 22 h24" stroke="#4a5666" stroke-width="1.2"/></g><rect x="131" y="91" width="1" height="29" fill="#d3d3da"/><g transform="translate(141,94)"><circle cx="9" cy="2" r="1.8" fill="#fff" stroke="#777" stroke-width="1"/><path d="M9 3 l-8 11 l8 6 l9 -6z" fill="#a4a8ad"/><path d="M9 3 l-8 11 l8 2z" fill="#d0d3d6"/><path d="M1 14 l8 6 l9 -6 v2 l-9 6 l-8 -6z" fill="#7c8086"/></g><g transform="translate(169,94)"><circle cx="11" cy="2" r="1.8" fill="#fff" stroke="#777" stroke-width="1"/><path d="M11 3 l-7 11 l7 6 l9 -6z" fill="#a4a8ad"/><path d="M4 14 l7 6 l9 -6 v2 l-9 6 l-7 -6z" fill="#7c8086"/><rect x="1" y="8" width="9" height="12" fill="#f8f8f8" stroke="#8d9196" stroke-width="1"/><path d="M3 11 h5 M3 14 h5 M3 17 h5" stroke="#9aa0a6" stroke-width="0.8"/></g><rect x="197" y="91" width="1" height="29" fill="#d3d3da"/><g transform="translate(204,94)"><rect x="1" y="0" width="5" height="22" fill="#a5a9ae" stroke="#8a8e93" stroke-width="0.8"/><path d="M6 9 q8 -2 15 -8 M6 11 q8 -3 14 -6 M6 14 q8 2 14 6 M6 16 q8 4 14 7" stroke="#9a9ea3" stroke-width="0.9" fill="none"/><rect x="6" y="10" width="15" height="4" fill="#e8eaec" stroke="#999da2" stroke-width="1"/></g><path d="M231 110 h8 l-4 4z" fill="#111"/><g transform="translate(270,96)"><rect x="1" y="2" width="22" height="16" fill="#e9eaec" opacity="0.7"/><path d="M0 10 h4 l2 -3 l2 6 l3 -11 l3 14 l2 -8 l2 4 l2 -2 h4" stroke="#d01020" stroke-width="1.8" fill="none"/></g><g transform="translate(302,94)"><path d="M2 20 l6 -8 v-8 q0 -3 3 -3 l3 0 q3 0 3 3 v2 M5 21 l6 -8 v-8 q0 -1 1 -1 h1 q1 0 1 1 v2" stroke="#888c92" stroke-width="1.2" fill="none"/><path d="M15 5 l5 -5" stroke="#999" stroke-width="0.8" stroke-dasharray="1 1"/><path d="M16 14 v7 M12.5 17.5 h7" stroke="#4b525a" stroke-width="2.2"/></g><path d="M328 110 h8 l-4 4z" fill="#111"/><g transform="translate(367,94)"><rect x="1" y="1" width="21" height="20" fill="url(#ghatch)"/><path d="M4 19 l13 -16" stroke="#555" stroke-width="2.2"/><path d="M4 19 l13 -16" stroke="#eee" stroke-width="0.9"/></g><g transform="translate(398,95)"><path d="M1 7 l5 -5 h12 v12 l-5 5 h-12z" fill="#f4f5f6" stroke="#444c55" stroke-width="1.5"/><path d="M1 7 h12 v12 M13 7 l5 -5" stroke="#444c55" stroke-width="1.5" fill="none"/><path d="M13 7 l5 -5 v12 l-5 5z" fill="#c9ced4"/></g><rect x="423.5" y="90.5" width="30" height="29" fill="#cce4f7" stroke="#5b9fe3" stroke-width="1"/><g transform="translate(429,99)"><path d="M1.5 3 q7 -3.5 14 0 v3 h-14z" fill="#3a4a5c"/><rect x="7" y="5" width="3.5" height="10" fill="#3a4a5c"/></g><path d="M454 110 h8 l-4 4z" fill="#111"/><g transform="translate(492,94)"><rect x="1" y="6" width="20" height="12" rx="1.5" fill="#aeb5bd" stroke="#5a636c" stroke-width="1.3"/><path d="M7 6 v-3 h8 v3" fill="none" stroke="#5a636c" stroke-width="1.5"/><path d="M1 12 h20" stroke="#5a636c" stroke-width="1.3"/></g><g transform="translate(523,94)"><rect x="1" y="1" width="17" height="13" rx="1" fill="#f3f4f6" stroke="#6a727b" stroke-width="1.3"/><path d="M4 4 h2 M8 4 h8 M4 7 h2 M8 7 h8 M4 10 h2 M8 10 h8" stroke="#8a939c" stroke-width="0.9"/><path d="M8 14 l-4 4" stroke="#6a727b" stroke-width="1.2"/><rect x="1" y="17" width="17" height="5" rx="2.5" fill="#fff" stroke="#3b4450" stroke-width="1.3"/><circle cx="3.5" cy="19.5" r="2" fill="#3b4450"/></g><rect x="550" y="91" width="1" height="29" fill="#d3d3da"/><g transform="translate(559,95)"><rect x="0" y="5" width="4" height="9" rx="1" fill="#9aa0a6"/><rect x="17" y="5" width="4" height="9" rx="1" fill="#9aa0a6"/><rect x="3" y="3" width="15" height="14" rx="2" fill="#c0202a"/><path d="M6 4 v12 M9 4 v12 M12 4 v12 M15 4 v12" stroke="#e04050" stroke-width="0.8"/></g><path d="M587.5 102.5 h5 l-2.5 2.5z" fill="#8a8a90"/><rect x="597" y="91" width="1" height="29" fill="#d3d3da"/><g transform="translate(607,94)"><circle cx="4.5" cy="9.5" r="3.8" fill="#9aa4ae" stroke="#3b4654" stroke-width="1.3"/><circle cx="4.5" cy="9.5" r="1.6" fill="#3b4654"/><rect x="11" y="1" width="6" height="21" fill="#fff" stroke="#3b4654" stroke-width="1.5"/><path d="M11 5 h3 M11 9 h3 M11 13 h3 M11 17 h3" stroke="#3b4654" stroke-width="1"/></g><g transform="translate(637,94)"><circle cx="4.5" cy="9.5" r="3.8" fill="#9aa4ae" stroke="#3b4654" stroke-width="1.3"/><circle cx="4.5" cy="9.5" r="1.6" fill="#3b4654"/><path d="M8 9.5 h5 M11 5 h3 M11 14 h3" stroke="#3b4654" stroke-width="1.3"/><rect x="13" y="1" width="6" height="21" fill="#fff" stroke="#3b4654" stroke-width="1.5"/><path d="M13 5 h3 M13 9 h3 M13 13 h3 M13 17 h3" stroke="#3b4654" stroke-width="1"/></g><g transform="translate(667,92)"><path d="M9 0 l4 0 l-1 5 h-2z" fill="#d01020"/><circle cx="11" cy="7" r="1" fill="#d01020"/><rect x="8" y="12" width="13" height="13" rx="6" fill="#1e2a36"/><circle cx="8" cy="18.5" r="7" fill="#1ea0bf"/><circle cx="8" cy="18.5" r="4.5" fill="#0e2a36"/><circle cx="8" cy="18.5" r="2.5" fill="#2bc0e0"/></g><rect x="694" y="91" width="1" height="29" fill="#d3d3da"/><g transform="translate(702,95)"><path d="M4 1 v6 M2 5 l2 3 l2 -3 M10 1 v6 M8 5 l2 3 l2 -3 M16 1 v6 M14 5 l2 3 l2 -3 M2 1 h16" stroke="#6a727b" stroke-width="1.3" fill="none"/><rect x="1" y="12" width="19" height="6" rx="3" fill="#fff" stroke="#6a727b" stroke-width="1.3"/></g><g transform="translate(730,93)"><path d="M4 3 h9 M10 1 l3 2 l-3 2 M8 7 h9 M14 5 l3 2 l-3 2" stroke="#5a6068" stroke-width="1.3" fill="none"/><path d="M1 23 v-8 q6 -5 10 0 q5 4 12 -4 v12z" fill="#eeeff1" stroke="#9ca1a7" stroke-width="1.2"/></g><rect x="759" y="91" width="1" height="29" fill="#d3d3da"/><g transform="translate(774,94)"><rect x="2.5" y="1" width="4" height="15" rx="2" fill="#fff" stroke="#8a9098" stroke-width="1"/><rect x="3.5" y="7" width="2" height="10" fill="#c8102e"/><circle cx="4.5" cy="18.5" r="3.5" fill="#c8102e"/></g><path d="M796.5 102.5 h5 l-2.5 2.5z" fill="#8a8a90"/><g transform="translate(811,96)"><circle cx="8" cy="8.5" r="7.3" fill="#f4f6f8" stroke="#4a535e" stroke-width="1.6"/><path d="M8 9 l4 -4" stroke="#c8102e" stroke-width="1.4"/><circle cx="8" cy="9" r="1.2" fill="#4a535e"/></g><path d="M837.5 102.5 h5 l-2.5 2.5z" fill="#8a8a90"/><rect x="848" y="91" width="1" height="29" fill="#d3d3da"/><g transform="translate(855,93)"><path d="M0.5 1 q4 -2 8 0 q0 5 -4 8 q-4 -3 -4 -8z" fill="#c81828"/><rect x="3.7" y="2.5" width="1.6" height="3" fill="#fff"/><rect x="3.7" y="6.2" width="1.6" height="1.3" fill="#fff"/><rect x="6" y="9" width="16" height="14" rx="6" fill="#c02018"/><path d="M10 10 h9 q3 3 0 6 h-9" fill="#e05030" opacity="0.7"/><ellipse cx="9" cy="16" rx="5" ry="7" fill="#3a0c0c"/><ellipse cx="9" cy="16" rx="2.5" ry="3.8" fill="#901010"/></g><g transform="translate(883,93)"><path d="M2 13 v-8 q0 -4 4 -4 q4 0 4 4 q0 4 -4 4 q-2 0 -3 -1.5" fill="none" stroke="#2a3440" stroke-width="2.2"/></g><g transform="translate(890,101)"><rect x="3" y="0.5" width="14" height="14" rx="6" fill="#f2f3f4" stroke="#4a525c" stroke-width="1.3"/><ellipse cx="5.5" cy="7.5" rx="5" ry="7" fill="#8a929c" stroke="#3e4650" stroke-width="1.2"/><ellipse cx="5.5" cy="7.5" rx="2.2" ry="3.5" fill="#c8ced4"/></g><g transform="translate(914,93)"><path d="M2 13 v-8 q0 -4 4 -4 q4 0 4 4 q0 4 -4 4 q-2 0 -3 -1.5" fill="none" stroke="#2a3440" stroke-width="2.2"/></g><g transform="translate(916,100)"><path d="M1 7 q5 -3 10 0 t10 -4 M1 11 q5 -3 10 0 t10 -4 M1 15 q5 -3 10 0 t10 -4" stroke="#2f4a5a" stroke-width="3.2" fill="none"/><path d="M1 7 q5 -3 10 0 t10 -4 M1 11 q5 -3 10 0 t10 -4 M1 15 q5 -3 10 0 t10 -4" stroke="#7fd4ea" stroke-width="1.8" fill="none"/></g><g transform="translate(943,93)"><path d="M2 13 v-8 q0 -4 4 -4 q4 0 4 4 q0 4 -4 4 q-2 0 -3 -1.5" fill="none" stroke="#2a3440" stroke-width="2.2"/></g><g transform="translate(949,101)"><rect x="3" y="0.5" width="15" height="14" rx="6" fill="#2a3440"/><ellipse cx="6" cy="7.5" rx="5.5" ry="7" fill="#28b4d8"/><ellipse cx="6" cy="7.5" rx="3" ry="4.2" fill="#0e2a36"/><ellipse cx="6" cy="7.5" rx="1.2" ry="2" fill="#1e88a8"/></g><path d="M973.5 102.5 h5 l-2.5 2.5z" fill="#8a8a90"/><rect x="984" y="91" width="1" height="29" fill="#d3d3da"/><g transform="translate(993,93)"><rect x="1" y="1" width="19" height="6" rx="3" fill="#fbfcfd" stroke="#3b4450" stroke-width="1.4"/><circle cx="4" cy="4" r="2.4" fill="#55606c"/><path d="M10.5 22 v-6 M7 17 l3.5 -4 l3.5 4z" stroke="#c00" stroke-width="2" fill="#c00"/></g><path d="M1019 110 h8 l-4 4z" fill="#111"/><g transform="translate(1062,96)"><path d="M1 5 l4 -4 h12 v12 l-4 4 h-12z" fill="#5d6f84" stroke="#3a4858" stroke-width="1.2"/><path d="M1 5 h12 v12 M13 5 l4 -4" stroke="#e6ebf0" stroke-width="1" fill="none"/></g><g transform="translate(1092,96)"><path d="M1 5 l4 -4 h12 v12 l-4 4 h-12z" fill="#e9edf1" stroke="#3a4858" stroke-width="1.6"/><rect x="5" y="1" width="12" height="12" fill="#6d7f94"/><path d="M1 5 h12 v12 M13 5 l4 -4 M1 17 l4 -4 M5 1 v12 h12" stroke="#3a4858" stroke-width="1.3" fill="none"/></g><rect x="1118" y="91" width="1" height="29" fill="#d3d3da"/><g transform="translate(1128,96)"><path d="M1 5 l4 -4 h12 v12 l-4 4 h-12z" fill="#f3f5f7" stroke="#3a4858" stroke-width="1.6"/><path d="M1 5 l4 -4 h12 l-4 4z" fill="#6d7f94"/><path d="M1 5 h12 v12 M13 5 l4 -4 M5 1 v12 h12 M1 17 l4 -4" stroke="#3a4858" stroke-width="1.2" fill="none"/></g><g transform="translate(1158,96)"><path d="M1 5 l4 -4 h12 v12 l-4 4 h-12z" fill="#f3f5f7" stroke="#3a4858" stroke-width="1.6"/><path d="M1 17 l4 -4 h12 l-4 4z" fill="#6d7f94"/><path d="M1 5 h12 v12 M13 5 l4 -4 M5 1 v12 h12 M1 17 l4 -4" stroke="#3a4858" stroke-width="1.2" fill="none"/></g><rect x="1184" y="91" width="1" height="29" fill="#d3d3da"/><g transform="translate(1195,96)"><path d="M1 5 l4 -4 h12 v12 l-4 4 h-12z" fill="#f3f5f7" stroke="#3a4858" stroke-width="1.6"/><path d="M1 5 l4 -4 v12 l-4 4z" fill="#6d7f94"/><path d="M1 5 h12 v12 M13 5 l4 -4 M5 1 v12 h12" stroke="#3a4858" stroke-width="1.1" fill="none"/></g><g transform="translate(1225,96)"><path d="M1 5 l4 -4 h12 v12 l-4 4 h-12z" fill="#f3f5f7" stroke="#5a6878" stroke-width="1.5"/><path d="M13 5 l4 -4 v12 l-4 4z" fill="#8391a0"/><path d="M1 5 h12 v12 M5 1 v12 h12 M1 17 l4 -4" stroke="#5a6878" stroke-width="1" fill="none"/></g><rect x="1250" y="91" width="1" height="29" fill="#d3d3da"/><g transform="translate(1261,94)"><path d="M8 1 l8 6 v10 l-8 6 l-8 -6 v-10z" fill="#c4cbd3" stroke="#3b4a5a" stroke-width="1.6"/><path d="M8 7 l4 4 l-4 4 l-4 -4z M8 1 v6 M0 7 l4 4 M16 7 l-4 4 M8 15 v8" fill="#eef1f4" stroke="#3b4a5a" stroke-width="1.1"/></g><path d="M1286.5 103.0 h5 l-2.5 2.5z" fill="#8a8a90"/><path d="M1296 110 h8 l-4 4z" fill="#111"/><rect x="0" y="122" width="44" height="704" fill="#f0f0f3"/><rect x="5" y="124" width="1.2" height="4" fill="#8a8a92"/><rect x="7.5" y="124" width="1.2" height="4" fill="#8a8a92"/><rect x="10.0" y="124" width="1.2" height="4" fill="#8a8a92"/><rect x="12.5" y="124" width="1.2" height="4" fill="#8a8a92"/><rect x="15.0" y="124" width="1.2" height="4" fill="#8a8a92"/><rect x="17.5" y="124" width="1.2" height="4" fill="#8a8a92"/><rect x="20.0" y="124" width="1.2" height="4" fill="#8a8a92"/><rect x="22.5" y="124" width="1.2" height="4" fill="#8a8a92"/><rect x="25.0" y="124" width="1.2" height="4" fill="#8a8a92"/><rect x="27.5" y="124" width="1.2" height="4" fill="#8a8a92"/><rect x="30.0" y="124" width="1.2" height="4" fill="#8a8a92"/><rect x="32.5" y="124" width="1.2" height="4" fill="#8a8a92"/><rect x="35.0" y="124" width="1.2" height="4" fill="#8a8a92"/><rect x="37.5" y="124" width="1.2" height="4" fill="#8a8a92"/><rect x="40.0" y="124" width="1.2" height="4" fill="#8a8a92"/><g transform="translate(13,140)"><rect x="0" y="0" width="3" height="14" fill="#3e5066"/><path d="M4 7 l7 -6 v4 h10 v4 h-10 v4z" fill="#3e5066"/></g><g transform="translate(14,171)"><path d="M1 7 l7 -6 v4 h10 v4 h-10 v4z" fill="#3e5066"/></g><g transform="translate(14,201)"><path d="M18 7 l-7 -6 v4 h-10 v4 h10 v4z" fill="#3e5066"/></g><g transform="translate(13,231)"><path d="M16 7 l-7 -6 v4 h-9 v4 h9 v4z" fill="#3e5066"/><rect x="18" y="0" width="3" height="14" fill="#3e5066"/></g><g transform="translate(12,258)"><path d="M7 6 q5 -6 10 0" stroke="#c8102e" stroke-width="1.5" fill="none"/><path d="M15 5 l3 2 l-1 -4z" fill="#c8102e"/><rect x="1" y="8" width="5" height="6" fill="#fff" stroke="#3e5066" stroke-width="1.6"/><rect x="9" y="8" width="5" height="6" fill="#fff" stroke="#3e5066" stroke-width="1.6"/><rect x="17" y="8" width="5" height="6" fill="#fff" stroke="#3e5066" stroke-width="1.6"/><path d="M6 11 h3 M14 11 h3" stroke="#3e5066" stroke-width="1.2"/></g><g transform="translate(15.5,285)"><path d="M2.5 6 q5 -6 10 0" stroke="#c8102e" stroke-width="1.5" fill="none"/><path d="M10.5 5 l3 2 l-1 -4z" fill="#c8102e"/><rect x="1" y="7" width="4.5" height="16" rx="2.2" fill="#fff" stroke="#2b3f4f" stroke-width="1.8"/><rect x="9" y="7" width="4.5" height="16" rx="2.2" fill="#fff" stroke="#2b3f4f" stroke-width="1.8"/></g><g transform="translate(13,320)"><path d="M1 8 l7 -7 v4 q10 0 12 12 q-5 -6 -12 -5 v4z" fill="#9ea3a8"/></g><path d="M8 372 l4 3.5 l-4 3.5 M12 372 l4 3.5 l-4 3.5" stroke="#888" stroke-width="1" fill="none"/><path d="M29 370 l6 5.5 l-6 5.5z" fill="#111"/><rect x="0" y="383" width="44" height="1" fill="#e0e0e6"/><rect x="3" y="426" width="40" height="1" fill="#d8d8de"/><rect x="5" y="387" width="1.2" height="4" fill="#8a8a92"/><rect x="7.5" y="387" width="1.2" height="4" fill="#8a8a92"/><rect x="10.0" y="387" width="1.2" height="4" fill="#8a8a92"/><rect x="12.5" y="387" width="1.2" height="4" fill="#8a8a92"/><rect x="15.0" y="387" width="1.2" height="4" fill="#8a8a92"/><rect x="17.5" y="387" width="1.2" height="4" fill="#8a8a92"/><rect x="20.0" y="387" width="1.2" height="4" fill="#8a8a92"/><rect x="22.5" y="387" width="1.2" height="4" fill="#8a8a92"/><rect x="25.0" y="387" width="1.2" height="4" fill="#8a8a92"/><rect x="27.5" y="387" width="1.2" height="4" fill="#8a8a92"/><rect x="30.0" y="387" width="1.2" height="4" fill="#8a8a92"/><rect x="32.5" y="387" width="1.2" height="4" fill="#8a8a92"/><rect x="35.0" y="387" width="1.2" height="4" fill="#8a8a92"/><rect x="37.5" y="387" width="1.2" height="4" fill="#8a8a92"/><rect x="40.0" y="387" width="1.2" height="4" fill="#8a8a92"/><g transform="translate(14,398)"><path d="M2 1 h10 l5 4 v14 h-5z" fill="#dfe4ea" stroke="#4a5560" stroke-width="1.2"/><rect x="0.8" y="6" width="12" height="14" fill="#f4f6f8" stroke="#3e4a58" stroke-width="1.5"/><path d="M1 13 h12 M5 9 h4 M5 16 h4" stroke="#3e4a58" stroke-width="1.3"/></g><g transform="translate(12,433)"><rect x="1" y="1" width="6" height="7" fill="#5a6878"/><rect x="15" y="1" width="6" height="7" fill="#5a6878"/><rect x="6" y="11" width="10" height="9" fill="#d02030"/><path d="M11 11 v-9 M8 5 l3 -3 l3 3" stroke="#c8102e" stroke-width="1.6" fill="none"/></g><g transform="translate(14,466)"><rect x="3" y="6" width="13" height="14" rx="1" fill="#b9c0c8" stroke="#4a5560" stroke-width="1.2"/><path d="M1 6 h17 M7 3 h5" stroke="#4a5560" stroke-width="1.5"/><path d="M6 9 l3 3 M9 9 l-3 3 M7.5 8 v5 M5 10.5 h5" stroke="#c8102e" stroke-width="1"/></g><g transform="translate(10,496)"><path d="M1 3 h9 l3 4 l3 -4 h9 v6 h-9 l-3 -3 l-3 3 h-9z" fill="#5f6f80"/><path d="M1 12 h9 l3 -3 l3 3 h9 v6 h-25z" fill="#3e5066"/><path d="M1 10 h24" stroke="#fff" stroke-width="1"/></g><rect x="0" y="524" width="44" height="1" fill="#e0e0e6"/><g transform="translate(11,529)"><circle cx="12" cy="12" r="10.5" fill="none" stroke="#3e5066" stroke-width="1.7"/><ellipse cx="12" cy="12" rx="5" ry="10.5" fill="none" stroke="#3e5066" stroke-width="1.4"/><path d="M2 8 h20 M2 16 h20 M12 1.5 v21" stroke="#3e5066" stroke-width="1.3"/></g><g transform="translate(11,561)"><rect x="1" y="3" width="21" height="17" fill="#fff" stroke="#3e5066" stroke-width="1.8"/><path d="M1 5 h21" stroke="#3e5066" stroke-width="2"/><path d="M11 0 v7 M8 2 l6 4 M14 2 l-6 4" stroke="#c8102e" stroke-width="1.1"/></g><g transform="translate(11,594)"><path d="M1 6 h21" stroke="#3e5066" stroke-width="1.5"/><rect x="8" y="3" width="6" height="6" fill="#fff" stroke="#3e5066" stroke-width="1.5"/><text x="5" y="16" font-family="Liberation Sans" font-weight="bold" font-size="6.5" fill="#c8102e">10+</text></g><g transform="translate(11,623)"><rect x="1" y="1" width="5" height="4" fill="#fff" stroke="#3e5066" stroke-width="1.3"/><rect x="17" y="1" width="5" height="4" fill="#fff" stroke="#3e5066" stroke-width="1.3"/><path d="M7 3 h2 M11 3 h2 M15 3 h1" stroke="#c8102e" stroke-width="1.2"/><rect x="1" y="8" width="21" height="6" fill="#fff" stroke="#3e5066" stroke-width="1.5"/><path d="M4 8 v3 M7 8 v3 M10 8 v3 M13 8 v3 M16 8 v3 M19 8 v3" stroke="#3e5066" stroke-width="1"/></g><g transform="translate(11,650)"><rect x="1" y="1" width="21" height="21" fill="#fff" stroke="#c8102e" stroke-width="2"/><rect x="1" y="1" width="21" height="3" fill="#c8102e"/><path d="M4 8 h15 M11.5 8 v10 M6 10 v7 M17 10 v7 M8 12 l3 -2 l3 2 M8 16 l3 2 l3 -2 M4 18 h15" stroke="#c8102e" stroke-width="1.3" fill="none"/></g><g transform="translate(11,680)"><rect x="1" y="1" width="21" height="21" fill="#fff" stroke="#c8102e" stroke-width="2"/><rect x="1" y="1" width="21" height="3" fill="#c8102e"/><path d="M5 7 v12 M18 7 v12 M8 7 v12 M15 7 v12 M8 9 l3.5 4 l3.5 -4 M8 17 l3.5 -4 l3.5 4" stroke="#c8102e" stroke-width="1.2" fill="none"/></g><g transform="translate(11,710)"><rect x="1" y="1" width="21" height="21" fill="#fff" stroke="#c8102e" stroke-width="2"/><rect x="1" y="1" width="21" height="3" fill="#c8102e"/><text x="6" y="17" font-family="Liberation Sans" font-weight="bold" font-size="12" fill="#c8102e">a</text><path d="M6 19 h11" stroke="#c8102e" stroke-width="1.3"/></g><path d="M8 762 l4 3.5 l-4 3.5 M12 762 l4 3.5 l-4 3.5" stroke="#888" stroke-width="1" fill="none"/><path d="M29 759 l6 5.5 l-6 5.5z" fill="#111"/><rect x="0" y="772" width="44" height="1" fill="#e0e0e6"/><rect x="5" y="775.5" width="1.2" height="4" fill="#8a8a92"/><rect x="7.5" y="775.5" width="1.2" height="4" fill="#8a8a92"/><rect x="10.0" y="775.5" width="1.2" height="4" fill="#8a8a92"/><rect x="12.5" y="775.5" width="1.2" height="4" fill="#8a8a92"/><rect x="15.0" y="775.5" width="1.2" height="4" fill="#8a8a92"/><rect x="17.5" y="775.5" width="1.2" height="4" fill="#8a8a92"/><rect x="20.0" y="775.5" width="1.2" height="4" fill="#8a8a92"/><rect x="22.5" y="775.5" width="1.2" height="4" fill="#8a8a92"/><rect x="25.0" y="775.5" width="1.2" height="4" fill="#8a8a92"/><rect x="27.5" y="775.5" width="1.2" height="4" fill="#8a8a92"/><rect x="30.0" y="775.5" width="1.2" height="4" fill="#8a8a92"/><rect x="32.5" y="775.5" width="1.2" height="4" fill="#8a8a92"/><rect x="35.0" y="775.5" width="1.2" height="4" fill="#8a8a92"/><rect x="37.5" y="775.5" width="1.2" height="4" fill="#8a8a92"/><rect x="40.0" y="775.5" width="1.2" height="4" fill="#8a8a92"/><g transform="translate(9,786)"><path d="M3 2 h14 v16 q0 2 -2 2 h-14 q2 0 2 -2z" fill="#dfe4ea" stroke="#3e5066" stroke-width="1.2"/><path d="M6 5 h8 M6 8 h8 M6 11 h8 M6 14 h8 M6 17 h8" stroke="#3e5066" stroke-width="1.3"/></g><path d="M37 795 l2.5 2.5 l-2.5 2.5z" fill="#777"/><path d="M29 813 l6 5.5 l-6 5.5z" fill="#111"/><rect x="1407" y="122" width="29" height="704" fill="#f0f0f3"/><rect x="1410" y="124" width="1.2" height="4" fill="#8a8a92"/><rect x="1412.5" y="124" width="1.2" height="4" fill="#8a8a92"/><rect x="1415.0" y="124" width="1.2" height="4" fill="#8a8a92"/><rect x="1417.5" y="124" width="1.2" height="4" fill="#8a8a92"/><rect x="1420.0" y="124" width="1.2" height="4" fill="#8a8a92"/><rect x="1422.5" y="124" width="1.2" height="4" fill="#8a8a92"/><rect x="1425.0" y="124" width="1.2" height="4" fill="#8a8a92"/><rect x="1427.5" y="124" width="1.2" height="4" fill="#8a8a92"/><rect x="1430.0" y="124" width="1.2" height="4" fill="#8a8a92"/><rect x="1432.5" y="124" width="1.2" height="4" fill="#8a8a92"/><rect x="1435.0" y="124" width="1.2" height="4" fill="#8a8a92"/><g transform="translate(1409,134)"><path d="M5 2 q-4 3 -3 8 M1 8 l2 3 l2 -3" stroke="#c8102e" stroke-width="1.4" fill="none"/><path d="M19 1 q4 3 3 8 M20 3 l-2 -2 l3 -1" stroke="#c8102e" stroke-width="1.4" fill="none"/><path d="M8 21 q5 2 10 -3 M16 18 h3 v3" stroke="#c8102e" stroke-width="1.4" fill="none"/><path d="M7 7 l5 -3 l5 3 v8 l-5 3 l-5 -3z" fill="#5a7088"/><path d="M7 7 l5 3 v8 l-5 -3z" fill="#e8eef4"/></g><g transform="translate(1410,168)"><path d="M12 3 q4 -3 8 0 M18 2 l2 2 l1 -3" stroke="#c8102e" stroke-width="1.4" fill="none"/><rect x="1" y="6" width="6" height="6" fill="#fff" stroke="#3e5066" stroke-width="1.7"/><rect x="8" y="6" width="6" height="6" fill="#fff" stroke="#3e5066" stroke-width="1.7"/><rect x="15" y="6" width="6" height="6" fill="#fff" stroke="#c8102e" stroke-width="1.7"/></g><g transform="translate(1410,201)"><rect x="1" y="2" width="6" height="6" fill="#fff" stroke="#3e5066" stroke-width="1.7"/><rect x="15" y="2" width="6" height="6" fill="#fff" stroke="#3e5066" stroke-width="1.7"/><path d="M9 2 l4 5 M13 2 l-4 5" stroke="#c8102e" stroke-width="1.5"/></g><g transform="translate(1410,229)"><path d="M1 5 h21" stroke="#3e5066" stroke-width="1.5"/><rect x="8" y="2" width="6" height="6" fill="#fff" stroke="#3e5066" stroke-width="1.5"/><text x="2" y="14" font-family="Liberation Sans" font-weight="bold" font-size="5.5" fill="#3e5066">10</text><text x="11" y="15" font-family="Liberation Sans" font-weight="bold" font-size="6" fill="#c8102e">20</text></g><g transform="translate(1411,256)"><rect x="7" y="1" width="6" height="5" fill="#fff" stroke="#3e5066" stroke-width="1.6"/><rect x="7" y="8" width="6" height="5" fill="#fff" stroke="#3e5066" stroke-width="1.6"/><rect x="7" y="15" width="6" height="5" fill="#fff" stroke="#3e5066" stroke-width="1.6"/><path d="M4 5 q-3 6 0 13 M2 16 l2 3 l2 -3 M16 4 q3 4 1 8 M15 4 l2 -2 l1 3" stroke="#c8102e" stroke-width="1.5" fill="none"/></g><g transform="translate(1410,285)"><rect x="1" y="1" width="6" height="6" fill="#dde3ea" stroke="#3e5066" stroke-width="1.5"/><rect x="10" y="1" width="6" height="6" fill="#dde3ea" stroke="#3e5066" stroke-width="1.5"/><rect x="9" y="12" width="13" height="11" fill="none" stroke="#c8102e" stroke-width="1.5" stroke-dasharray="2 1.5"/><path d="M4 9 v7 h4 M6 14 l2 2 l-2 2" stroke="#c8102e" stroke-width="1.5" fill="none"/></g><path d="M1427 312 l5 4.5 l-5 4.5z" fill="#111"/><rect x="1407" y="385" width="29" height="1" fill="#e4e4ea"/><rect x="1410" y="390" width="1.2" height="4" fill="#8a8a92"/><rect x="1412.5" y="390" width="1.2" height="4" fill="#8a8a92"/><rect x="1415.0" y="390" width="1.2" height="4" fill="#8a8a92"/><rect x="1417.5" y="390" width="1.2" height="4" fill="#8a8a92"/><rect x="1420.0" y="390" width="1.2" height="4" fill="#8a8a92"/><rect x="1422.5" y="390" width="1.2" height="4" fill="#8a8a92"/><rect x="1425.0" y="390" width="1.2" height="4" fill="#8a8a92"/><rect x="1427.5" y="390" width="1.2" height="4" fill="#8a8a92"/><rect x="1430.0" y="390" width="1.2" height="4" fill="#8a8a92"/><rect x="1432.5" y="390" width="1.2" height="4" fill="#8a8a92"/><rect x="1435.0" y="390" width="1.2" height="4" fill="#8a8a92"/><g transform="translate(1412,404)"><path d="M1 3 l2 -2 h17 v12 h-19z" fill="#b01020"/><text x="5" y="10.5" font-family="Liberation Sans" font-weight="bold" font-size="7" fill="#fff">113</text></g><path d="M1427 429 l5 4.5 l-5 4.5z" fill="#111"/><rect x="1407" y="440" width="29" height="1" fill="#e4e4ea"/><rect x="1407" y="515" width="29" height="1" fill="#e0e0e6"/><rect x="1410" y="519" width="1.2" height="4" fill="#8a8a92"/><rect x="1412.5" y="519" width="1.2" height="4" fill="#8a8a92"/><rect x="1415.0" y="519" width="1.2" height="4" fill="#8a8a92"/><rect x="1417.5" y="519" width="1.2" height="4" fill="#8a8a92"/><rect x="1420.0" y="519" width="1.2" height="4" fill="#8a8a92"/><rect x="1422.5" y="519" width="1.2" height="4" fill="#8a8a92"/><rect x="1425.0" y="519" width="1.2" height="4" fill="#8a8a92"/><rect x="1427.5" y="519" width="1.2" height="4" fill="#8a8a92"/><rect x="1430.0" y="519" width="1.2" height="4" fill="#8a8a92"/><rect x="1432.5" y="519" width="1.2" height="4" fill="#8a8a92"/><rect x="1435.0" y="519" width="1.2" height="4" fill="#8a8a92"/><g transform="translate(1410,529)"><rect x="1" y="1" width="20" height="20" rx="2" fill="none" stroke="#3e5066" stroke-width="2"/><path d="M11 1 v20 M1 11 h20" stroke="#3e5066" stroke-width="2"/></g><g transform="translate(1416,561)"><path d="M2.5 14.5 L11.5 3.5" stroke="#4a5cb8" stroke-width="6.5" stroke-linecap="round"/><path d="M3 13 L11 4" stroke="#8898e0" stroke-width="2" stroke-linecap="round"/><path d="M4 15 L13 5" stroke="#c8102e" stroke-width="1.2"/></g><path d="M1427 586 l5 4.5 l-5 4.5z" fill="#111"/><rect x="227" y="827" width="592" height="32" fill="#f2f2f5"/><rect x="818" y="829" width="1" height="28" fill="#e0e0e6"/><rect x="825" y="827" width="269" height="32" fill="#f2f2f5"/><rect x="1093" y="829" width="1" height="28" fill="#e0e0e6"/><rect x="1100" y="827" width="185" height="32" fill="#f2f2f5"/><rect x="1284" y="829" width="1" height="28" fill="#e0e0e6"/><rect x="1291" y="827" width="145" height="32" fill="#f2f2f5"/><rect x="1435" y="829" width="1" height="28" fill="#e0e0e6"/><rect x="229.9" y="830.9" width="1.3" height="1.3" fill="#77777f"/><rect x="233.9" y="830.9" width="1.3" height="1.3" fill="#77777f"/><rect x="231.9" y="832.9" width="1.3" height="1.3" fill="#77777f"/><rect x="229.9" y="834.9" width="1.3" height="1.3" fill="#77777f"/><rect x="233.9" y="834.9" width="1.3" height="1.3" fill="#77777f"/><rect x="231.9" y="836.9" width="1.3" height="1.3" fill="#77777f"/><rect x="229.9" y="838.9" width="1.3" height="1.3" fill="#77777f"/><rect x="233.9" y="838.9" width="1.3" height="1.3" fill="#77777f"/><rect x="231.9" y="840.9" width="1.3" height="1.3" fill="#77777f"/><rect x="229.9" y="842.9" width="1.3" height="1.3" fill="#77777f"/><rect x="233.9" y="842.9" width="1.3" height="1.3" fill="#77777f"/><rect x="231.9" y="844.9" width="1.3" height="1.3" fill="#77777f"/><rect x="229.9" y="846.9" width="1.3" height="1.3" fill="#77777f"/><rect x="233.9" y="846.9" width="1.3" height="1.3" fill="#77777f"/><rect x="231.9" y="848.9" width="1.3" height="1.3" fill="#77777f"/><rect x="229.9" y="850.9" width="1.3" height="1.3" fill="#77777f"/><rect x="233.9" y="850.9" width="1.3" height="1.3" fill="#77777f"/><rect x="231.9" y="852.9" width="1.3" height="1.3" fill="#77777f"/><rect x="229.9" y="854.9" width="1.3" height="1.3" fill="#77777f"/><rect x="233.9" y="854.9" width="1.3" height="1.3" fill="#77777f"/><rect x="828.9" y="830.9" width="1.3" height="1.3" fill="#77777f"/><rect x="832.9" y="830.9" width="1.3" height="1.3" fill="#77777f"/><rect x="830.9" y="832.9" width="1.3" height="1.3" fill="#77777f"/><rect x="828.9" y="834.9" width="1.3" height="1.3" fill="#77777f"/><rect x="832.9" y="834.9" width="1.3" height="1.3" fill="#77777f"/><rect x="830.9" y="836.9" width="1.3" height="1.3" fill="#77777f"/><rect x="828.9" y="838.9" width="1.3" height="1.3" fill="#77777f"/><rect x="832.9" y="838.9" width="1.3" height="1.3" fill="#77777f"/><rect x="830.9" y="840.9" width="1.3" height="1.3" fill="#77777f"/><rect x="828.9" y="842.9" width="1.3" height="1.3" fill="#77777f"/><rect x="832.9" y="842.9" width="1.3" height="1.3" fill="#77777f"/><rect x="830.9" y="844.9" width="1.3" height="1.3" fill="#77777f"/><rect x="828.9" y="846.9" width="1.3" height="1.3" fill="#77777f"/><rect x="832.9" y="846.9" width="1.3" height="1.3" fill="#77777f"/><rect x="830.9" y="848.9" width="1.3" height="1.3" fill="#77777f"/><rect x="828.9" y="850.9" width="1.3" height="1.3" fill="#77777f"/><rect x="832.9" y="850.9" width="1.3" height="1.3" fill="#77777f"/><rect x="830.9" y="852.9" width="1.3" height="1.3" fill="#77777f"/><rect x="828.9" y="854.9" width="1.3" height="1.3" fill="#77777f"/><rect x="832.9" y="854.9" width="1.3" height="1.3" fill="#77777f"/><rect x="1103.9" y="830.9" width="1.3" height="1.3" fill="#77777f"/><rect x="1107.9" y="830.9" width="1.3" height="1.3" fill="#77777f"/><rect x="1105.9" y="832.9" width="1.3" height="1.3" fill="#77777f"/><rect x="1103.9" y="834.9" width="1.3" height="1.3" fill="#77777f"/><rect x="1107.9" y="834.9" width="1.3" height="1.3" fill="#77777f"/><rect x="1105.9" y="836.9" width="1.3" height="1.3" fill="#77777f"/><rect x="1103.9" y="838.9" width="1.3" height="1.3" fill="#77777f"/><rect x="1107.9" y="838.9" width="1.3" height="1.3" fill="#77777f"/><rect x="1105.9" y="840.9" width="1.3" height="1.3" fill="#77777f"/><rect x="1103.9" y="842.9" width="1.3" height="1.3" fill="#77777f"/><rect x="1107.9" y="842.9" width="1.3" height="1.3" fill="#77777f"/><rect x="1105.9" y="844.9" width="1.3" height="1.3" fill="#77777f"/><rect x="1103.9" y="846.9" width="1.3" height="1.3" fill="#77777f"/><rect x="1107.9" y="846.9" width="1.3" height="1.3" fill="#77777f"/><rect x="1105.9" y="848.9" width="1.3" height="1.3" fill="#77777f"/><rect x="1103.9" y="850.9" width="1.3" height="1.3" fill="#77777f"/><rect x="1107.9" y="850.9" width="1.3" height="1.3" fill="#77777f"/><rect x="1105.9" y="852.9" width="1.3" height="1.3" fill="#77777f"/><rect x="1103.9" y="854.9" width="1.3" height="1.3" fill="#77777f"/><rect x="1107.9" y="854.9" width="1.3" height="1.3" fill="#77777f"/><rect x="1294.9" y="830.9" width="1.3" height="1.3" fill="#77777f"/><rect x="1298.9" y="830.9" width="1.3" height="1.3" fill="#77777f"/><rect x="1296.9" y="832.9" width="1.3" height="1.3" fill="#77777f"/><rect x="1294.9" y="834.9" width="1.3" height="1.3" fill="#77777f"/><rect x="1298.9" y="834.9" width="1.3" height="1.3" fill="#77777f"/><rect x="1296.9" y="836.9" width="1.3" height="1.3" fill="#77777f"/><rect x="1294.9" y="838.9" width="1.3" height="1.3" fill="#77777f"/><rect x="1298.9" y="838.9" width="1.3" height="1.3" fill="#77777f"/><rect x="1296.9" y="840.9" width="1.3" height="1.3" fill="#77777f"/><rect x="1294.9" y="842.9" width="1.3" height="1.3" fill="#77777f"/><rect x="1298.9" y="842.9" width="1.3" height="1.3" fill="#77777f"/><rect x="1296.9" y="844.9" width="1.3" height="1.3" fill="#77777f"/><rect x="1294.9" y="846.9" width="1.3" height="1.3" fill="#77777f"/><rect x="1298.9" y="846.9" width="1.3" height="1.3" fill="#77777f"/><rect x="1296.9" y="848.9" width="1.3" height="1.3" fill="#77777f"/><rect x="1294.9" y="850.9" width="1.3" height="1.3" fill="#77777f"/><rect x="1298.9" y="850.9" width="1.3" height="1.3" fill="#77777f"/><rect x="1296.9" y="852.9" width="1.3" height="1.3" fill="#77777f"/><rect x="1294.9" y="854.9" width="1.3" height="1.3" fill="#77777f"/><rect x="1298.9" y="854.9" width="1.3" height="1.3" fill="#77777f"/><g transform="translate(248,834)"><path d="M1 9 h6 q3 0 3 -3 v-5 h7 v7 q0 8.5 -8.5 8.5 h-7.5z" fill="#fff" stroke="#3e4a58" stroke-width="1.8"/></g><path d="M274 843.5 h6 l-3 -3z" fill="#8a8a90"/><rect x="283.5" y="828.5" width="40" height="29" fill="#cce4f7" stroke="#5b9fe3" stroke-width="1"/><g transform="translate(287,834)"><path d="M1 3 v14 M4 3 v14" stroke="#3e4a58" stroke-width="1.6"/><path d="M4 6 h5 l2 4 l2 -4 h5 v8 h-5 l-2 -4 l-2 4 h-5z" fill="#fff" stroke="#3e4a58" stroke-width="1.5"/><path d="M18 3 v14 M21 3 v14 M11 10 v-7 M8 2 h6" stroke="#3e4a58" stroke-width="1.6"/></g><path d="M315 843.5 h6 l-3 -3z" fill="#8a8a90"/><g transform="translate(327,834)"><path d="M1 1 v20 M4 1 v20 M19 1 v20 M22 1 v20 M4 4 l7.5 7 l7.5 -7 M4 18 l7.5 -7 l7.5 7 M11.5 2 v18" stroke="#3e4a58" stroke-width="1.5" fill="none"/></g><path d="M357 843.5 h6 l-3 -3z" fill="#8a8a90"/><g transform="translate(370,835)"><path d="M1 2 l18 3 v10 l-18 3z" fill="#fff" stroke="#3e4a58" stroke-width="1.8"/><path d="M5 2 v16" stroke="#3e4a58" stroke-width="1.4"/></g><path d="M397 843.5 h6 l-3 -3z" fill="#8a8a90"/><g transform="translate(410,835)"><path d="M1 1 h20 v6 h-6 v12 h-7 v-12 h-7z" fill="#fff" stroke="#3e4a58" stroke-width="2"/></g><rect x="438" y="831" width="1" height="26" fill="#d3d3da"/><rect x="442.5" y="828.5" width="29" height="29" fill="#cce4f7" stroke="#5b9fe3" stroke-width="1"/><g transform="translate(447,835)"><path d="M2 10.5 l9.5 -9.5 l9.5 9.5z" fill="#fff" stroke="#3e4a58" stroke-width="1.5"/><path d="M3 14.5 l3 -3.5 M7 14.5 l3 -3.5 M11 14.5 l3 -3.5 M15 14.5 l3 -3.5 M19 14.5 l3 -3.5" stroke="#3e4a58" stroke-width="1.2"/></g><g transform="translate(476,833)"><rect x="1" y="2" width="19" height="16" rx="1" fill="#e6eaee" stroke="#3e4a58" stroke-width="2"/><path d="M5 6 h11 M5 9 h11 M5 12 h11 M5 15 h11" stroke="#3e4a58" stroke-width="1.3"/><path d="M8 18 l2.5 3 l2.5 -3z" fill="#3e4a58"/></g><path d="M505 843.5 h6 l-3 -3z" fill="#8a8a90"/><g transform="translate(520,834)"><rect x="1" y="1" width="5" height="20" fill="#fff" stroke="#3e4a58" stroke-width="1.6"/><rect x="6" y="4" width="11" height="14" fill="#fff" stroke="#3e4a58" stroke-width="1.6"/><path d="M6 11 h11" stroke="#3e4a58" stroke-width="1.2"/></g><g transform="translate(551,834)"><path d="M2 18 l6 -13 l6 13z" fill="none" stroke="#4e5660" stroke-width="2.4"/><text x="11" y="8" font-family="Liberation Sans" font-weight="bold" font-size="8" fill="#4e5660">x</text></g><rect x="576" y="831" width="1" height="26" fill="#d3d3da"/><g transform="translate(584,834)"><path d="M10 1 v8 M7 6 l3 4 l3 -4" stroke="#3e4a58" stroke-width="1.7" fill="none"/><rect x="1" y="13" width="18" height="5" rx="2.5" fill="#fff" stroke="#3e4a58" stroke-width="1.5"/><circle cx="3.5" cy="15.5" r="2" fill="#3e4a58"/></g><g transform="translate(612,833)"><path d="M3 3 h9 M9 1 l3 2 l-3 2 M8 7 h10 M15 5 l3 2 l-3 2" stroke="#3e4a58" stroke-width="1.6" fill="none"/><path d="M1 22 v-7 q6 -5 10 0 q5 4 12 -4 v11z" fill="#fff" stroke="#3e4a58" stroke-width="1.4"/></g><g transform="translate(644,834)"><path d="M3 2 h15 M5 2 v6 M3 6 l2 2 l2 -2 M10 2 v6 M8 6 l2 2 l2 -2 M15 2 v6 M13 6 l2 2 l2 -2" stroke="#3e4a58" stroke-width="1.6" fill="none"/><rect x="1" y="12" width="18" height="6" rx="3" fill="#fff" stroke="#3e4a58" stroke-width="1.6"/></g><rect x="672" y="831" width="1" height="26" fill="#d3d3da"/><rect x="675.5" y="828.5" width="30" height="29" fill="#cce4f7" stroke="#5b9fe3" stroke-width="1"/><g transform="translate(680,832)"><path d="M2 22 l18 -20" stroke="#d41a2a" stroke-width="2.2"/><path d="M10 3 h10 M8 8 h8 M6 13 h6 M4 18 h4" stroke="#d41a2a" stroke-width="1.4"/><path d="M10 2 v20" stroke="#d41a2a" stroke-width="1.2"/></g><g transform="translate(709,833)"><path d="M1 6 h22" stroke="#3e4a58" stroke-width="1.4"/><rect x="8" y="3" width="6" height="6" rx="1" fill="#fff" stroke="#3e4a58" stroke-width="1.5"/><path d="M3 11 v11 M1 11 h4 M1 22 h4" stroke="#3e4a58" stroke-width="1.4"/><text x="7.5" y="20" font-family="Liberation Sans" font-weight="bold" font-size="11" fill="#c8102e">a</text></g><g transform="translate(740,835)"><path d="M4 5 h13 M4 5 l3 -2 v4z M17 5 l-3 -2 v4z" stroke="#c8102e" stroke-width="1.5" fill="#c8102e"/><rect x="1" y="10" width="5" height="5" fill="#fff" stroke="#3e4a58" stroke-width="1.7"/><rect x="15" y="10" width="5" height="5" fill="#fff" stroke="#3e4a58" stroke-width="1.7"/><path d="M6 12.5 h2 M10 12.5 h1 M13 12.5 h2" stroke="#3e4a58" stroke-width="1"/></g><g transform="translate(776,834)"><path d="M1 1 h3 q5 10 0 20 h-3z" fill="#fff" stroke="#777c82" stroke-width="1.6"/><path d="M3 2 q3 9 0 18" stroke="#777c82" stroke-width="1" fill="none"/></g><path d="M797 842.5 h6 l-3 -3z" fill="#8a8a90"/><path d="M807 848 h8 l-4 4z" fill="#111"/><rect x="844.8" y="831.8" width="22.4" height="22.2" fill="#fff" stroke="#2f3e50" stroke-width="1.6"/><rect x="844" y="831" width="24" height="4" fill="#2f3e50"/><rect x="874.8" y="831.8" width="22.4" height="22.2" fill="#fff" stroke="#2f3e50" stroke-width="1.6"/><rect x="874" y="831" width="24" height="4" fill="#2f3e50"/><rect x="904.8" y="831.8" width="22.4" height="22.2" fill="#fff" stroke="#2f3e50" stroke-width="1.6"/><rect x="904" y="831" width="24" height="4" fill="#2f3e50"/><rect x="934.8" y="831.8" width="22.4" height="22.2" fill="#fff" stroke="#2f3e50" stroke-width="1.6"/><rect x="934" y="831" width="24" height="4" fill="#2f3e50"/><rect x="964.8" y="831.8" width="22.4" height="22.2" fill="#fff" stroke="#2f3e50" stroke-width="1.6"/><rect x="964" y="831" width="24" height="4" fill="#2f3e50"/><rect x="994.8" y="831.8" width="22.4" height="22.2" fill="#fff" stroke="#2f3e50" stroke-width="1.6"/><rect x="994" y="831" width="24" height="4" fill="#2f3e50"/><rect x="1024.8" y="831.8" width="22.4" height="22.2" fill="#fff" stroke="#2f3e50" stroke-width="1.6"/><rect x="1024" y="831" width="24" height="4" fill="#2f3e50"/><rect x="1054.8" y="831.8" width="22.4" height="22.2" fill="#fff" stroke="#2f3e50" stroke-width="1.6"/><rect x="1054" y="831" width="24" height="4" fill="#2f3e50"/><g transform="translate(844,831)"><path d="M3 10 h18" stroke="#c8102e" stroke-width="1.5"/><rect x="9" y="7" width="6" height="6" fill="#fff" stroke="#c8102e" stroke-width="1.5"/><text x="7" y="20" font-family="Liberation Sans" font-weight="bold" font-size="6.5" fill="#3e5066">10</text></g><g transform="translate(874,831)"><path d="M5 19 l7 -12 l7 12z" fill="none" stroke="#c8102e" stroke-width="2"/></g><g transform="translate(904,831)"><circle cx="9" cy="13" r="4.5" fill="none" stroke="#c8102e" stroke-width="1.2"/><circle cx="9" cy="13" r="2.5" fill="#c8102e"/><rect x="15" y="6" width="5" height="15" fill="none" stroke="#c8102e" stroke-width="1.3"/><path d="M15 9 h3 M15 12 h3 M15 15 h3 M15 18 h3" stroke="#c8102e" stroke-width="1"/></g><g transform="translate(934,831)"><rect x="5" y="6" width="3" height="11" rx="1.5" fill="none" stroke="#c8102e" stroke-width="1.2"/><circle cx="6.5" cy="18" r="2.8" fill="#c8102e"/><circle cx="16" cy="14" r="5" fill="none" stroke="#c8102e" stroke-width="1.4"/><path d="M16 14 l3 -3" stroke="#c8102e" stroke-width="1.2"/></g><g transform="translate(964,831)"><rect x="3" y="10" width="18" height="10" rx="1" fill="none" stroke="#c8102e" stroke-width="1.6"/><path d="M9 10 v-3 h6 v3 M3 14 h18" stroke="#c8102e" stroke-width="1.4" fill="none"/></g><g transform="translate(994,831)"><text x="5.5" y="20.5" font-family="Liberation Serif" font-weight="bold" font-size="17" fill="#c8102e">E</text></g><g transform="translate(1024,831)"><text x="2" y="19" font-family="Liberation Serif" font-weight="bold" font-size="11" fill="#c8102e" transform="scale(0.95,1.15) translate(0,-2.5)">Rho</text></g><g transform="translate(1054,831)"><path d="M6 9 h8 M12 7 l3 2 l-3 2 M9 13 h8 M15 11 l3 2 l-3 2" stroke="#c8102e" stroke-width="1.5" fill="none"/><path d="M2 20 q4 -6 9 -2 q5 4 11 -3" stroke="#c8102e" stroke-width="1.5" fill="none"/></g><path d="M1082 848 h8 l-4 4z" fill="#111"/><g transform="translate(1120,832)"><path d="M7 14 l10 -13" stroke="#4a535e" stroke-width="3.5"/><path d="M7 14 l10 -13" stroke="#e8eaec" stroke-width="1.3"/><path d="M9 13 q6 -6 12 -7" stroke="#555" stroke-width="3" opacity="0.45" fill="none"/><path d="M6 15 q-6 2 -4 6 q4 3 16 -3" stroke="#d02838" stroke-width="1.1" fill="none"/></g><g transform="translate(1150,832)"><path d="M7 14 l10 -13" stroke="#4a535e" stroke-width="3.5"/><path d="M7 14 l10 -13" stroke="#e8eaec" stroke-width="1.3"/><path d="M9 13 q6 -6 12 -7" stroke="#555" stroke-width="3" opacity="0.45" fill="none"/><rect x="2" y="14" width="8" height="8" fill="none" stroke="#d02838" stroke-width="1.2"/></g><g transform="translate(1180,832)"><path d="M7 14 l10 -13" stroke="#4a535e" stroke-width="3.5"/><path d="M7 14 l10 -13" stroke="#e8eaec" stroke-width="1.3"/><path d="M9 13 q6 -6 12 -7" stroke="#555" stroke-width="3" opacity="0.45" fill="none"/><circle cx="6" cy="18" r="4.5" fill="none" stroke="#d02838" stroke-width="1.2"/></g><g transform="translate(1214,834)"><text x="1" y="15" font-family="Liberation Sans" font-weight="bold" font-size="10" fill="#c8102e">a</text><path d="M10 3 h4 M10 19 h4 M12 3 v16" stroke="#3e4a58" stroke-width="1.5"/></g><rect x="1238" y="831" width="1" height="26" fill="#d3d3da"/><g transform="translate(1248,834)"><rect x="1" y="1" width="11" height="10" fill="#dfe3e8" stroke="#555c64" stroke-width="1.6"/><text x="3" y="9.5" font-family="Liberation Sans" font-weight="bold" font-size="8" fill="#c8102e">a</text><path d="M10 10 l6 6 M13 16 h3.5 v-3.5" stroke="#3e4a58" stroke-width="1.6" fill="none"/></g><path d="M1273 848 h8 l-4 4z" fill="#111"/><g transform="translate(1315,832)"><path d="M3 20 v-17 M3 20 l12 -13 M3 20 h14" stroke="#c8102e" stroke-width="1.6" fill="none"/><path d="M1 5 l2 -3 l2 3 M13 5 l3 0 l-1 4 M15 18 l3 2 l-3 2" stroke="#c8102e" stroke-width="1.6" fill="none"/><path d="M2 10 v11 l3 -3 l2 4 l2 -1 l-2 -4 h4z" fill="#556070" stroke="#eee" stroke-width="0.5"/></g><g transform="translate(1343,834)"><path d="M1 4 h13 v13 h-13z" fill="url(#gdoc)" stroke="#6e747b" stroke-width="1.4"/><path d="M1 10 h6 v7" stroke="#6e747b" stroke-width="1.2" fill="none"/><path d="M2 20 h17 M16 18 l3 2 l-3 2" stroke="#6e747b" stroke-width="1.5" fill="none"/></g><g transform="translate(1372,834)"><path d="M5 4 h13 v14 h-13z" fill="url(#gdoc)" stroke="#6e747b" stroke-width="1.4"/><path d="M5 10 h6 v8" stroke="#6e747b" stroke-width="1.2" fill="none"/><path d="M3 19 v-18 M1 3 l2 -2.5 l2 2.5" stroke="#6e747b" stroke-width="1.5" fill="none"/></g><g transform="translate(1402,834)"><path d="M1 4 h13 v13 h-13z" fill="url(#gdoc)" stroke="#6e747b" stroke-width="1.4"/><path d="M1 10 h6 v7" stroke="#6e747b" stroke-width="1.2" fill="none"/><path d="M1 17 l17 -16 M13 1 h5 v5" stroke="#6e747b" stroke-width="1.4" fill="none"/></g><path d="M1427 848 h8 l-4 4z" fill="#111"/><path d="M1392 143 l4.5 -4.5 l4.5 4.5" stroke="#555" stroke-width="1.8" fill="none"/><path d="M1392 776 l4.5 4.5 l4.5 -4.5" stroke="#555" stroke-width="1.8" fill="none"/><path d="M94 792 l-4.5 4.5 l4.5 4.5" stroke="#555" stroke-width="1.8" fill="none"/><path d="M1376 792 l4.5 4.5 l-4.5 4.5" stroke="#555" stroke-width="1.8" fill="none"/><g fill="#a8a8b0"><rect x="1399" y="793" width="2" height="2"/><rect x="1396" y="796" width="2" height="2"/><rect x="1399" y="796" width="2" height="2"/><rect x="1393" y="799" width="2" height="2"/><rect x="1396" y="799" width="2" height="2"/><rect x="1399" y="799" width="2" height="2"/></g><rect x="12.5" y="5.5" width="15" height="15" fill="#f3fbe8" stroke="#8bc34a" stroke-width="1.2"/><text x="14.5" y="17" font-family="Liberation Sans" font-weight="bold" font-size="9" fill="#7cb342">C2</text><path d="M1350 15.5 h9" stroke="#111" stroke-width="1.6"/><rect x="1384.5" y="13.2" width="6.5" height="6.2" fill="none" stroke="#111" stroke-width="1.4"/><path d="M1386.5 11.5 v-2 h6.5 v6.5 h-2" stroke="#111" stroke-width="1.4" fill="none"/><path d="M1417.5 8 l9.5 9.5 M1427 8 l-9.5 9.5" stroke="#111" stroke-width="1.7"/><rect x="9.9" y="31.9" width="1.3" height="1.3" fill="#77777f"/><rect x="13.9" y="31.9" width="1.3" height="1.3" fill="#77777f"/><rect x="11.9" y="33.9" width="1.3" height="1.3" fill="#77777f"/><rect x="9.9" y="35.9" width="1.3" height="1.3" fill="#77777f"/><rect x="13.9" y="35.9" width="1.3" height="1.3" fill="#77777f"/><rect x="11.9" y="37.9" width="1.3" height="1.3" fill="#77777f"/><rect x="9.9" y="39.9" width="1.3" height="1.3" fill="#77777f"/><rect x="13.9" y="39.9" width="1.3" height="1.3" fill="#77777f"/><rect x="11.9" y="41.9" width="1.3" height="1.3" fill="#77777f"/><rect x="9.9" y="43.9" width="1.3" height="1.3" fill="#77777f"/><rect x="13.9" y="43.9" width="1.3" height="1.3" fill="#77777f"/><rect x="11.9" y="45.9" width="1.3" height="1.3" fill="#77777f"/><path d="M182.8 550.4 L670.8 266.9" stroke="#47505c" stroke-width="1.9" stroke-linecap="round"/><path d="M670.8 266.9 L661.7 260.7" stroke="#6d8097" stroke-width="2.4" stroke-linecap="round"/><path d="M670.8 266.9 L661.7 260.7" stroke="#e2ebf2" stroke-width="0.8"/><path d="M661.7 260.7 L674.6 253.7" stroke="#47505c" stroke-width="1.9" stroke-linecap="round"/><path d="M674.6 253.7 L854.4 150.3" stroke="#47505c" stroke-width="1.9" stroke-linecap="round"/><path d="M854.4 150.3 L981 224" stroke="#6d8097" stroke-width="2.4" stroke-linecap="round"/><path d="M854.4 150.3 L981 224" stroke="#e2ebf2" stroke-width="0.8"/><path d="M674.6 253.7 L801.5 328.8" stroke="#6d8097" stroke-width="2.4" stroke-linecap="round"/><path d="M674.6 253.7 L801.5 328.8" stroke="#e2ebf2" stroke-width="0.8"/><path d="M801.5 328.8 L800.5 331.5" stroke="#47505c" stroke-width="1.9" stroke-linecap="round"/><path d="M800.5 331.5 L831 349.3" stroke="#6d8097" stroke-width="2.4" stroke-linecap="round"/><path d="M800.5 331.5 L831 349.3" stroke="#e2ebf2" stroke-width="0.8"/><path d="M831 349.3 L836.6 347.5" stroke="#47505c" stroke-width="1.9" stroke-linecap="round"/><path d="M836.6 347.5 L941 408" stroke="#6d8097" stroke-width="2.4" stroke-linecap="round"/><path d="M836.6 347.5 L941 408" stroke="#e2ebf2" stroke-width="0.8"/><path d="M941 408 L885.3 440.7" stroke="#47505c" stroke-width="1.9" stroke-linecap="round"/><path d="M595 311 L613 321.7" stroke="#6d8097" stroke-width="2.4" stroke-linecap="round"/><path d="M595 311 L613 321.7" stroke="#e2ebf2" stroke-width="0.8"/><path d="M613 321.7 L629.2 312.5" stroke="#47505c" stroke-width="1.9" stroke-linecap="round"/><path d="M629.2 312.5 L710.6 358" stroke="#6d8097" stroke-width="2.4" stroke-linecap="round"/><path d="M629.2 312.5 L710.6 358" stroke="#e2ebf2" stroke-width="0.8"/><path d="M710.6 358 L712.5 361.3" stroke="#6d8097" stroke-width="2.4" stroke-linecap="round"/><path d="M710.6 358 L712.5 361.3" stroke="#e2ebf2" stroke-width="0.8"/><path d="M712.5 361.3 L734.8 375.2" stroke="#6d8097" stroke-width="2.4" stroke-linecap="round"/><path d="M712.5 361.3 L734.8 375.2" stroke="#e2ebf2" stroke-width="0.8"/><path d="M734.8 375.2 L750.2 385" stroke="#6d8097" stroke-width="2.4" stroke-linecap="round"/><path d="M734.8 375.2 L750.2 385" stroke="#e2ebf2" stroke-width="0.8"/><path d="M750.2 385 L750.2 406" stroke="#47505c" stroke-width="1.9" stroke-linecap="round"/><path d="M750.2 406 L772 416.7" stroke="#6d8097" stroke-width="2.4" stroke-linecap="round"/><path d="M750.2 406 L772 416.7" stroke="#e2ebf2" stroke-width="0.8"/><path d="M772 416.7 L799 430" stroke="#6d8097" stroke-width="2.4" stroke-linecap="round"/><path d="M772 416.7 L799 430" stroke="#e2ebf2" stroke-width="0.8"/><path d="M347.9 708.8 L368.8 696.6" stroke="#47505c" stroke-width="1.9" stroke-linecap="round"/><path d="M368.8 696.6 L368.8 680.3" stroke="#47505c" stroke-width="1.9" stroke-linecap="round"/><path d="M368.8 680.3 L526.2 589" stroke="#47505c" stroke-width="1.9" stroke-linecap="round"/><path d="M526.2 589 L540.9 588.4" stroke="#47505c" stroke-width="1.9" stroke-linecap="round"/><path d="M540.9 588.4 L618 543.5" stroke="#47505c" stroke-width="1.9" stroke-linecap="round"/><path d="M618 543.5 L618 535" stroke="#47505c" stroke-width="1.9" stroke-linecap="round"/><path d="M618 535 L812 422" stroke="#47505c" stroke-width="1.9" stroke-linecap="round"/><path d="M812 422 L825 422" stroke="#6d8097" stroke-width="2.4" stroke-linecap="round"/><path d="M812 422 L825 422" stroke="#e2ebf2" stroke-width="0.8"/><path d="M825 422 L899.3 466" stroke="#6d8097" stroke-width="2.4" stroke-linecap="round"/><path d="M825 422 L899.3 466" stroke="#e2ebf2" stroke-width="0.8"/><path d="M899.3 466 L899.3 471.4" stroke="#47505c" stroke-width="1.9" stroke-linecap="round"/><path d="M899.3 471.4 L416.4 752.9" stroke="#47505c" stroke-width="1.9" stroke-linecap="round"/><path d="M182.8 550.4 L225 576.3" stroke="#6d8097" stroke-width="2.4" stroke-linecap="round"/><path d="M182.8 550.4 L225 576.3" stroke="#e2ebf2" stroke-width="0.8"/><path d="M225 576.3 L198.8 592" stroke="#47505c" stroke-width="1.9" stroke-linecap="round"/><path d="M198.8 592 L214.7 602.2" stroke="#6d8097" stroke-width="2.4" stroke-linecap="round"/><path d="M198.8 592 L214.7 602.2" stroke="#e2ebf2" stroke-width="0.8"/><path d="M214.7 602.2 L190.4 616.9" stroke="#47505c" stroke-width="1.9" stroke-linecap="round"/><path d="M190.4 616.9 L187.9 621.4" stroke="#47505c" stroke-width="1.9" stroke-linecap="round"/><path d="M187.9 621.4 L336.3 707.2" stroke="#6d8097" stroke-width="2.4" stroke-linecap="round"/><path d="M187.9 621.4 L336.3 707.2" stroke="#e2ebf2" stroke-width="0.8"/><path d="M336.3 707.2 L341.5 705.9" stroke="#47505c" stroke-width="1.9" stroke-linecap="round"/><path d="M341.5 705.9 L347.9 708.8" stroke="#6d8097" stroke-width="2.4" stroke-linecap="round"/><path d="M341.5 705.9 L347.9 708.8" stroke="#e2ebf2" stroke-width="0.8"/><path d="M347.9 708.8 L354.9 716.9" stroke="#6d8097" stroke-width="2.4" stroke-linecap="round"/><path d="M347.9 708.8 L354.9 716.9" stroke="#e2ebf2" stroke-width="0.8"/><path d="M354.9 716.9 L416.4 752.9" stroke="#6d8097" stroke-width="2.4" stroke-linecap="round"/><path d="M354.9 716.9 L416.4 752.9" stroke="#e2ebf2" stroke-width="0.8"/><path d="M594.8 649.5 L654.7 683.5" stroke="#6d8097" stroke-width="2.4" stroke-linecap="round"/><path d="M594.8 649.5 L654.7 683.5" stroke="#e2ebf2" stroke-width="0.8"/><path d="M654.7 683.5 L688.2 665.6" stroke="#47505c" stroke-width="1.9" stroke-linecap="round"/><path d="M688.2 665.6 L692.3 665.2" stroke="#47505c" stroke-width="1.9" stroke-linecap="round"/><path d="M692.3 665.2 L716 651.7" stroke="#47505c" stroke-width="1.9" stroke-linecap="round"/><path d="M599 688.5 L631 671.8" stroke="#47505c" stroke-width="1.9" stroke-linecap="round"/><path d="M372.4 439.8 L395.4 453.4 L396.5 448" stroke="#6f8196" stroke-width="1.4" fill="none" stroke-dasharray="2 0.7"/><path d="M491 372.7 L518.6 387.4 L519.5 382" stroke="#6f8196" stroke-width="1.4" fill="none" stroke-dasharray="2 0.7"/><path d="M492 608.5 L466 587.4 L466.5 584" stroke="#6f8196" stroke-width="1.4" fill="none" stroke-dasharray="2 0.7"/><path d="M602 550 L570.4 527.6 L571 524" stroke="#6f8196" stroke-width="1.4" fill="none" stroke-dasharray="2 0.7"/><path d="M717 475 L691 457.3 L691.5 454" stroke="#6f8196" stroke-width="1.4" fill="none" stroke-dasharray="2 0.7"/><path d="M214.7 602.2 L214.7 593 L216.5 591.5" stroke="#6f8196" stroke-width="1.4" fill="none" stroke-dasharray="2 0.7"/><path d="M291.3 679 L291.3 668 L293 666.5" stroke="#6f8196" stroke-width="1.4" fill="none" stroke-dasharray="2 0.7"/><path d="M192.1 545.8 l1.5 -3 l1.5 -3" stroke="#3f4854" stroke-width="1.3" fill="none"/><path d="M285.2 493 l1.5 -3 l1.5 -3" stroke="#3f4854" stroke-width="1.3" fill="none"/><path d="M635.9 320.4 l1.5 -3 l1.5 -3" stroke="#3f4854" stroke-width="1.3" fill="none"/><path d="M853.5 443 l1.5 -3 l1.5 -3" stroke="#3f4854" stroke-width="1.3" fill="none"/><path d="M849.5 501 l1.5 -3 l1.5 -3" stroke="#3f4854" stroke-width="1.3" fill="none"/><path d="M737.5 566 l1.5 -3 l1.5 -3" stroke="#3f4854" stroke-width="1.3" fill="none"/><path d="M577.5 660 l1.5 -3 l1.5 -3" stroke="#3f4854" stroke-width="1.3" fill="none"/><path d="M440.5 738 l1.5 -3 l1.5 -3" stroke="#3f4854" stroke-width="1.3" fill="none"/><path d="M735.5 381 l1.5 -3 l1.5 -3" stroke="#3f4854" stroke-width="1.3" fill="none"/><path d="M800.5 333 l1.5 -3 l1.5 -3" stroke="#3f4854" stroke-width="1.3" fill="none"/><defs><radialGradient id="gdome" cx="0.5" cy="0.75" r="0.6"><stop offset="0" stop-color="#8a8a84"/><stop offset="1" stop-color="#c8c8c0"/></radialGradient></defs><path d="M120 734 q0 -28 19.5 -32 q19.5 4 19 32 q-19 9 -38.5 0z" fill="url(#gdome)" opacity="0.75"/><path d="M139.5 722 L117.5 711" stroke="#a85a28" stroke-width="4" stroke-linecap="round"/><path d="M139 721 L122 713" stroke="#e0a878" stroke-width="1.5"/><circle cx="117.5" cy="711" r="3.3" fill="#6a3010"/><path d="M139.5 722 L118 736" stroke="#5a0c0c" stroke-width="4.2"/><circle cx="118" cy="736.5" r="4.5" fill="#e01414"/><circle cx="117" cy="735" r="1.5" fill="#ff8080"/><path d="M139.5 722 L160.5 735.5" stroke="#1414a8" stroke-width="4.5"/><circle cx="160.8" cy="735.8" r="4.2" fill="#0c0c80"/><rect x="137" y="697" width="5.5" height="26" fill="#1a8a1a"/><rect x="138.5" y="697" width="2" height="26" fill="#40c040"/><path d="M133.5 700 q6 -9 12 0z" fill="#20a820"/><text x="134.5" y="688.5" font-family="Liberation Sans" font-size="14" fill="#50c850">Y</text><text x="103.5" y="705.5" font-family="Liberation Sans" font-size="14" fill="#c07040">N</text><text x="103.5" y="741.5" font-family="Liberation Sans" font-size="14" fill="#d01c1c">Z</text><text x="164.5" y="741.5" font-family="Liberation Sans" font-size="14" fill="#1414c0">X</text>
</svg>
</body></html>
